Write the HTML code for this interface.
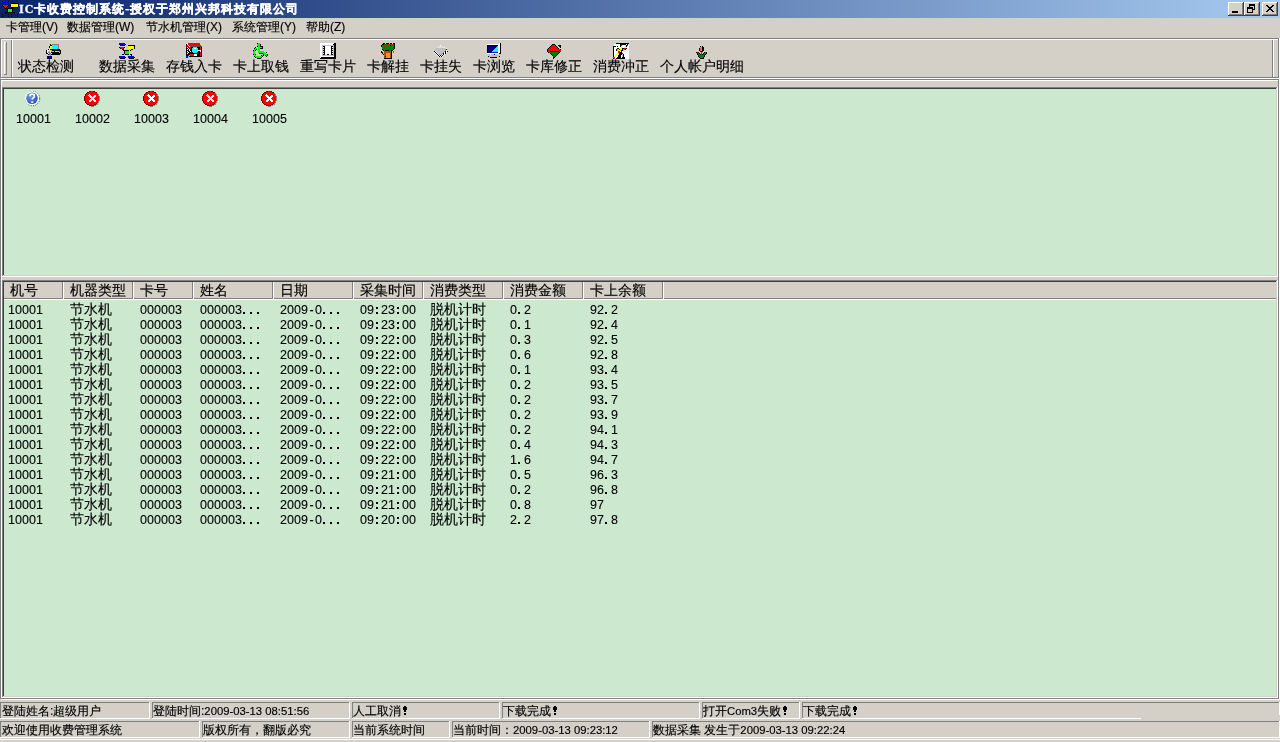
<!DOCTYPE html><html><head><meta charset="utf-8"><style>
*{margin:0;padding:0}
html,body{width:1280px;height:742px;overflow:hidden}
body{background:#D4D0C8;}
#root{position:absolute;left:0;top:0;width:1280px;height:742px;overflow:hidden;will-change:transform;background:#D4D0C8;font-family:"Liberation Sans",sans-serif;color:#000}
.r{position:absolute}
.ic{position:absolute;display:block}
.t{position:absolute;white-space:nowrap;-webkit-text-stroke:0.15px #000}
#title{position:absolute;left:0;top:0;width:1280px;height:18px;background:linear-gradient(to right,#0A246A,#A6CAF0)}
.ttl{-webkit-text-stroke:0.3px #fff;color:#fff;font-weight:bold;font-size:12px;line-height:16px;letter-spacing:1px}
.cb{position:absolute;width:16px;height:14px;background:#D4D0C8;box-shadow:inset -1px -1px 0 #404040, inset 1px 1px 0 #fff, inset -2px -2px 0 #808080}
.m{font-size:12px;line-height:14px}
.tb{font-size:14px;line-height:16px}
.h{font-size:14px;line-height:16px}
.d{font-size:12.5px;line-height:15px;margin-top:3px;-webkit-text-stroke:0.1px #000}
.d i{font-style:normal;display:inline-block;width:7px;text-align:center}
.d i.p,.d i.c{position:relative;height:15px;vertical-align:top}
.d i.p:after{content:'';position:absolute;left:1px;top:9px;width:2px;height:2px;background:#000}
.d i.c:before{content:'';position:absolute;left:2px;top:4px;width:2px;height:2px;background:#000}
.d i.c:after{content:'';position:absolute;left:2px;top:9px;width:2px;height:2px;background:#000}
.dc{font-size:14px;line-height:15px;margin-top:2px}
.s{font-size:12px;line-height:14px}
.s b{font-weight:bold}
.sf{font-family:"Liberation Serif",serif;font-size:12px}
.s .a{font-size:11.3px}
.ex{display:inline-block;vertical-align:top}
</style></head><body><div id="root"><div id="title"></div><svg class="ic" style="left:2px;top:1px" width="16" height="16" shape-rendering="crispEdges"><rect x="0" y="0" width="1" height="1" fill="#000000"/><rect x="6" y="0" width="1" height="1" fill="#000000"/><rect x="0" y="1" width="7" height="1" fill="#0000ff"/><rect x="0" y="2" width="1" height="1" fill="#000000"/><rect x="6" y="2" width="1" height="1" fill="#000000"/><rect x="9" y="2" width="7" height="1" fill="#000000"/><rect x="3" y="3" width="1" height="1" fill="#000000"/><rect x="9" y="3" width="7" height="1" fill="#ffff00"/><rect x="0" y="4" width="1" height="1" fill="#000000"/><rect x="1" y="4" width="5" height="1" fill="#ff0000"/><rect x="6" y="4" width="3" height="1" fill="#000000"/><rect x="9" y="4" width="7" height="1" fill="#ffff00"/><rect x="1" y="5" width="1" height="1" fill="#000000"/><rect x="2" y="5" width="3" height="1" fill="#ff0000"/><rect x="5" y="5" width="1" height="1" fill="#000000"/><rect x="9" y="5" width="7" height="1" fill="#ffff00"/><rect x="2" y="6" width="1" height="1" fill="#000000"/><rect x="3" y="6" width="1" height="1" fill="#ff0000"/><rect x="4" y="6" width="1" height="1" fill="#000000"/><rect x="9" y="6" width="7" height="1" fill="#000000"/><rect x="3" y="7" width="2" height="1" fill="#000000"/><rect x="6" y="7" width="6" height="1" fill="#000000"/><rect x="5" y="8" width="1" height="1" fill="#000000"/><rect x="6" y="8" width="4" height="1" fill="#00ff00"/><rect x="10" y="8" width="1" height="1" fill="#000000"/><rect x="5" y="9" width="1" height="1" fill="#000000"/><rect x="6" y="9" width="4" height="1" fill="#00ff00"/><rect x="10" y="9" width="1" height="1" fill="#000000"/><rect x="5" y="10" width="1" height="1" fill="#000000"/><rect x="6" y="10" width="4" height="1" fill="#00ff00"/><rect x="10" y="10" width="1" height="1" fill="#000000"/><rect x="3" y="11" width="10" height="1" fill="#000000"/><rect x="3" y="12" width="1" height="1" fill="#000000"/><rect x="12" y="12" width="1" height="1" fill="#000000"/><rect x="0" y="13" width="1" height="1" fill="#000000"/><rect x="6" y="13" width="1" height="1" fill="#000000"/><rect x="9" y="13" width="1" height="1" fill="#000000"/><rect x="15" y="13" width="1" height="1" fill="#000000"/><rect x="0" y="14" width="7" height="1" fill="#0000ff"/><rect x="9" y="14" width="7" height="1" fill="#0000ff"/><rect x="0" y="15" width="1" height="1" fill="#000000"/><rect x="6" y="15" width="1" height="1" fill="#000000"/><rect x="9" y="15" width="1" height="1" fill="#000000"/><rect x="15" y="15" width="1" height="1" fill="#000000"/></svg><div class="t ttl" style="left:19px;top:1px"><span class="sf">IC</span>卡收费控制系统<span class="sf">-</span>授权于郑州兴邦科技有限公司</div><div class="cb" style="left:1228px;top:2px"><div class="r" style="left:4px;top:9px;width:6px;height:2px;background:#000"></div></div><div class="cb" style="left:1244px;top:2px"><div class="r" style="left:5px;top:2px;width:6px;height:6px;border:1px solid #000;border-top-width:2px;box-sizing:border-box"></div><div class="r" style="left:3px;top:5px;width:6px;height:6px;border:1px solid #000;border-top-width:2px;box-sizing:border-box;background:#D4D0C8"></div></div><div class="cb" style="left:1262px;top:2px"><svg class="ic" style="left:4px;top:3px" width="8" height="7" shape-rendering="crispEdges"><rect x="0" y="0" width="2" height="1" fill="#000000"/><rect x="6" y="0" width="2" height="1" fill="#000000"/><rect x="1" y="1" width="2" height="1" fill="#000000"/><rect x="5" y="1" width="2" height="1" fill="#000000"/><rect x="2" y="2" width="4" height="1" fill="#000000"/><rect x="3" y="3" width="2" height="1" fill="#000000"/><rect x="2" y="4" width="4" height="1" fill="#000000"/><rect x="1" y="5" width="2" height="1" fill="#000000"/><rect x="5" y="5" width="2" height="1" fill="#000000"/><rect x="0" y="6" width="2" height="1" fill="#000000"/><rect x="6" y="6" width="2" height="1" fill="#000000"/></svg></div><div class="t m" style="left:6px;top:20px">卡管理(V)</div><div class="t m" style="left:67px;top:20px">数据管理(W)</div><div class="t m" style="left:146px;top:20px">节水机管理(X)</div><div class="t m" style="left:232px;top:20px">系统管理(Y)</div><div class="t m" style="left:306px;top:20px">帮助(Z)</div><div class="r" style="left:0px;top:38px;width:1279px;height:1px;background:#808080"></div><div class="r" style="left:0px;top:38px;width:1px;height:40px;background:#808080"></div><div class="r" style="left:0px;top:77px;width:1279px;height:1px;background:#808080"></div><div class="r" style="left:1278px;top:38px;width:1px;height:40px;background:#808080"></div><div class="r" style="left:1px;top:39px;width:1277px;height:1px;background:#ffffff"></div><div class="r" style="left:1px;top:39px;width:1px;height:38px;background:#ffffff"></div><div class="r" style="left:1px;top:78px;width:1279px;height:1px;background:#ffffff"></div><div class="r" style="left:1279px;top:38px;width:1px;height:41px;background:#ffffff"></div><div class="r" style="left:4px;top:42px;width:2px;height:1px;background:#ffffff"></div><div class="r" style="left:4px;top:42px;width:1px;height:32px;background:#ffffff"></div><div class="r" style="left:6px;top:42px;width:1px;height:33px;background:#808080"></div><div class="r" style="left:4px;top:74px;width:3px;height:1px;background:#808080"></div><div class="r" style="left:11px;top:40px;width:1px;height:37px;background:#808080"></div><div class="r" style="left:12px;top:40px;width:1px;height:37px;background:#ffffff"></div><div class="r" style="left:1272px;top:40px;width:1px;height:37px;background:#808080"></div><div class="r" style="left:1273px;top:40px;width:1px;height:37px;background:#ffffff"></div><div class="t tb" style="left:18px;top:58px">状态检测</div><div class="t tb" style="left:99px;top:58px">数据采集</div><div class="t tb" style="left:166px;top:58px">存钱入卡</div><div class="t tb" style="left:233px;top:58px">卡上取钱</div><div class="t tb" style="left:300px;top:58px">重写卡片</div><div class="t tb" style="left:367px;top:58px">卡解挂</div><div class="t tb" style="left:420px;top:58px">卡挂失</div><div class="t tb" style="left:473px;top:58px">卡浏览</div><div class="t tb" style="left:526px;top:58px">卡库修正</div><div class="t tb" style="left:593px;top:58px">消费冲正</div><div class="t tb" style="left:660px;top:58px">个人帐户明细</div><svg class="ic" style="left:45px;top:44px" width="17" height="15" shape-rendering="crispEdges"><rect x="5" y="0" width="1" height="1" fill="#000000"/><rect x="7" y="0" width="7" height="1" fill="#808080"/><rect x="5" y="1" width="2" height="1" fill="#000000"/><rect x="7" y="1" width="6" height="1" fill="#00ffff"/><rect x="13" y="1" width="1" height="1" fill="#808080"/><rect x="4" y="2" width="1" height="1" fill="#000000"/><rect x="5" y="2" width="2" height="1" fill="#ffff00"/><rect x="7" y="2" width="6" height="1" fill="#00ffff"/><rect x="13" y="2" width="1" height="1" fill="#808080"/><rect x="4" y="3" width="1" height="1" fill="#000000"/><rect x="5" y="3" width="2" height="1" fill="#ffff00"/><rect x="7" y="3" width="6" height="1" fill="#00ffff"/><rect x="13" y="3" width="1" height="1" fill="#808080"/><rect x="5" y="4" width="2" height="1" fill="#ffff00"/><rect x="7" y="4" width="6" height="1" fill="#00ffff"/><rect x="13" y="4" width="1" height="1" fill="#808080"/><rect x="3" y="5" width="1" height="1" fill="#000000"/><rect x="4" y="5" width="1" height="1" fill="#ffffff"/><rect x="5" y="5" width="2" height="1" fill="#000080"/><rect x="7" y="5" width="8" height="1" fill="#000000"/><rect x="1" y="6" width="1" height="1" fill="#000000"/><rect x="2" y="6" width="2" height="1" fill="#ffffff"/><rect x="4" y="6" width="3" height="1" fill="#c0c0c0"/><rect x="7" y="6" width="9" height="1" fill="#000000"/><rect x="1" y="7" width="1" height="1" fill="#000000"/><rect x="2" y="7" width="1" height="1" fill="#ffffff"/><rect x="3" y="7" width="2" height="1" fill="#c0c0c0"/><rect x="5" y="7" width="1" height="1" fill="#ffffff"/><rect x="6" y="7" width="1" height="1" fill="#808080"/><rect x="7" y="7" width="2" height="1" fill="#c0c0c0"/><rect x="9" y="7" width="1" height="1" fill="#000000"/><rect x="10" y="7" width="1" height="1" fill="#ffff00"/><rect x="11" y="7" width="3" height="1" fill="#c0c0c0"/><rect x="14" y="7" width="1" height="1" fill="#808080"/><rect x="15" y="7" width="1" height="1" fill="#000000"/><rect x="1" y="8" width="1" height="1" fill="#000000"/><rect x="2" y="8" width="1" height="1" fill="#ffffff"/><rect x="3" y="8" width="2" height="1" fill="#808080"/><rect x="5" y="8" width="1" height="1" fill="#c0c0c0"/><rect x="6" y="8" width="8" height="1" fill="#000000"/><rect x="14" y="8" width="1" height="1" fill="#c0c0c0"/><rect x="15" y="8" width="1" height="1" fill="#000000"/><rect x="1" y="9" width="2" height="1" fill="#000000"/><rect x="3" y="9" width="1" height="1" fill="#ffffff"/><rect x="4" y="9" width="2" height="1" fill="#808080"/><rect x="6" y="9" width="1" height="1" fill="#ffffff"/><rect x="7" y="9" width="9" height="1" fill="#000000"/><rect x="3" y="10" width="1" height="1" fill="#000000"/><rect x="4" y="10" width="2" height="1" fill="#808080"/><rect x="6" y="10" width="9" height="1" fill="#000000"/><rect x="5" y="11" width="1" height="1" fill="#808080"/><rect x="2" y="12" width="5" height="1" fill="#000080"/><rect x="2" y="13" width="1" height="1" fill="#000080"/><rect x="3" y="13" width="1" height="1" fill="#000000"/><rect x="4" y="13" width="3" height="1" fill="#000080"/><rect x="2" y="14" width="3" height="1" fill="#000080"/><rect x="5" y="14" width="1" height="1" fill="#000000"/><rect x="6" y="14" width="1" height="1" fill="#000080"/></svg><svg class="ic" style="left:118px;top:43px" width="18" height="16" shape-rendering="crispEdges"><rect x="1" y="0" width="6" height="1" fill="#0000ff"/><rect x="1" y="1" width="6" height="1" fill="#0000ff"/><rect x="7" y="1" width="1" height="1" fill="#000000"/><rect x="2" y="2" width="5" height="1" fill="#000000"/><rect x="10" y="2" width="7" height="1" fill="#000000"/><rect x="10" y="3" width="6" height="1" fill="#ffff00"/><rect x="16" y="3" width="1" height="1" fill="#000000"/><rect x="1" y="4" width="1" height="1" fill="#000000"/><rect x="2" y="4" width="4" height="1" fill="#ff0000"/><rect x="6" y="4" width="1" height="1" fill="#000000"/><rect x="10" y="4" width="6" height="1" fill="#ffff00"/><rect x="16" y="4" width="1" height="1" fill="#000000"/><rect x="2" y="5" width="1" height="1" fill="#000000"/><rect x="3" y="5" width="2" height="1" fill="#ff0000"/><rect x="5" y="5" width="1" height="1" fill="#000000"/><rect x="10" y="5" width="6" height="1" fill="#ffff00"/><rect x="16" y="5" width="1" height="1" fill="#000000"/><rect x="4" y="6" width="2" height="1" fill="#000000"/><rect x="13" y="6" width="2" height="1" fill="#000000"/><rect x="5" y="7" width="6" height="1" fill="#000000"/><rect x="12" y="7" width="1" height="1" fill="#000000"/><rect x="6" y="8" width="1" height="1" fill="#000000"/><rect x="7" y="8" width="4" height="1" fill="#00ff00"/><rect x="6" y="9" width="1" height="1" fill="#000000"/><rect x="7" y="9" width="4" height="1" fill="#00ff00"/><rect x="6" y="10" width="1" height="1" fill="#000000"/><rect x="7" y="10" width="4" height="1" fill="#00ff00"/><rect x="4" y="11" width="2" height="1" fill="#000000"/><rect x="7" y="11" width="4" height="1" fill="#000000"/><rect x="12" y="11" width="2" height="1" fill="#000000"/><rect x="13" y="12" width="1" height="1" fill="#000000"/><rect x="1" y="13" width="6" height="1" fill="#0000ff"/><rect x="10" y="13" width="6" height="1" fill="#0000ff"/><rect x="1" y="14" width="6" height="1" fill="#0000ff"/><rect x="7" y="14" width="1" height="1" fill="#000000"/><rect x="10" y="14" width="6" height="1" fill="#0000ff"/><rect x="16" y="14" width="1" height="1" fill="#000000"/><rect x="2" y="15" width="5" height="1" fill="#000000"/><rect x="11" y="15" width="5" height="1" fill="#000000"/></svg><svg class="ic" style="left:186px;top:43px" width="16" height="15" shape-rendering="crispEdges"><rect x="2" y="0" width="12" height="1" fill="#505050"/><rect x="0" y="1" width="1" height="1" fill="#000000"/><rect x="1" y="1" width="1" height="1" fill="#ffffff"/><rect x="2" y="1" width="12" height="1" fill="#ff0000"/><rect x="0" y="2" width="1" height="1" fill="#000000"/><rect x="1" y="2" width="1" height="1" fill="#ff0000"/><rect x="2" y="2" width="1" height="1" fill="#ffffff"/><rect x="3" y="2" width="12" height="1" fill="#ff0000"/><rect x="0" y="3" width="1" height="1" fill="#ff0000"/><rect x="1" y="3" width="1" height="1" fill="#000000"/><rect x="2" y="3" width="1" height="1" fill="#ff0000"/><rect x="3" y="3" width="1" height="1" fill="#ffffff"/><rect x="4" y="3" width="12" height="1" fill="#505050"/><rect x="0" y="4" width="1" height="1" fill="#000000"/><rect x="1" y="4" width="1" height="1" fill="#ffffff"/><rect x="2" y="4" width="1" height="1" fill="#000000"/><rect x="3" y="4" width="2" height="1" fill="#ff0000"/><rect x="5" y="4" width="2" height="1" fill="#000000"/><rect x="7" y="4" width="4" height="1" fill="#00ffff"/><rect x="11" y="4" width="3" height="1" fill="#000000"/><rect x="14" y="4" width="1" height="1" fill="#ff0000"/><rect x="15" y="4" width="1" height="1" fill="#000000"/><rect x="0" y="5" width="2" height="1" fill="#000000"/><rect x="2" y="5" width="1" height="1" fill="#ffffff"/><rect x="3" y="5" width="1" height="1" fill="#000000"/><rect x="4" y="5" width="1" height="1" fill="#ff0000"/><rect x="5" y="5" width="1" height="1" fill="#000000"/><rect x="6" y="5" width="2" height="1" fill="#00ffff"/><rect x="8" y="5" width="2" height="1" fill="#ffffff"/><rect x="10" y="5" width="2" height="1" fill="#00ffff"/><rect x="12" y="5" width="2" height="1" fill="#000000"/><rect x="14" y="5" width="1" height="1" fill="#ff0000"/><rect x="15" y="5" width="1" height="1" fill="#000000"/><rect x="0" y="6" width="1" height="1" fill="#000000"/><rect x="1" y="6" width="1" height="1" fill="#ffffff"/><rect x="2" y="6" width="1" height="1" fill="#000000"/><rect x="3" y="6" width="1" height="1" fill="#ffffff"/><rect x="4" y="6" width="2" height="1" fill="#000000"/><rect x="6" y="6" width="6" height="1" fill="#00ffff"/><rect x="12" y="6" width="2" height="1" fill="#000000"/><rect x="14" y="6" width="1" height="1" fill="#ff0000"/><rect x="15" y="6" width="1" height="1" fill="#000000"/><rect x="0" y="7" width="3" height="1" fill="#000000"/><rect x="3" y="7" width="1" height="1" fill="#ffffff"/><rect x="4" y="7" width="2" height="1" fill="#000000"/><rect x="6" y="7" width="6" height="1" fill="#00ffff"/><rect x="12" y="7" width="3" height="1" fill="#ffffff"/><rect x="15" y="7" width="1" height="1" fill="#000000"/><rect x="0" y="8" width="1" height="1" fill="#000000"/><rect x="1" y="8" width="1" height="1" fill="#ffffff"/><rect x="2" y="8" width="2" height="1" fill="#000000"/><rect x="4" y="8" width="1" height="1" fill="#ffffff"/><rect x="5" y="8" width="1" height="1" fill="#000000"/><rect x="6" y="8" width="6" height="1" fill="#00ffff"/><rect x="12" y="8" width="2" height="1" fill="#000000"/><rect x="14" y="8" width="1" height="1" fill="#ffff00"/><rect x="15" y="8" width="1" height="1" fill="#000000"/><rect x="0" y="9" width="1" height="1" fill="#000000"/><rect x="1" y="9" width="1" height="1" fill="#ff0000"/><rect x="2" y="9" width="1" height="1" fill="#ffffff"/><rect x="3" y="9" width="2" height="1" fill="#000000"/><rect x="5" y="9" width="1" height="1" fill="#0000ff"/><rect x="6" y="9" width="1" height="1" fill="#000000"/><rect x="7" y="9" width="4" height="1" fill="#00ffff"/><rect x="11" y="9" width="3" height="1" fill="#000000"/><rect x="14" y="9" width="1" height="1" fill="#ff0000"/><rect x="15" y="9" width="1" height="1" fill="#000000"/><rect x="0" y="10" width="1" height="1" fill="#000000"/><rect x="1" y="10" width="1" height="1" fill="#ffffff"/><rect x="2" y="10" width="2" height="1" fill="#000000"/><rect x="4" y="10" width="1" height="1" fill="#0000ff"/><rect x="5" y="10" width="9" height="1" fill="#000000"/><rect x="14" y="10" width="1" height="1" fill="#ff0000"/><rect x="15" y="10" width="1" height="1" fill="#000000"/><rect x="0" y="11" width="3" height="1" fill="#000000"/><rect x="3" y="11" width="1" height="1" fill="#0000ff"/><rect x="4" y="11" width="4" height="1" fill="#ff0000"/><rect x="8" y="11" width="3" height="1" fill="#ffffff"/><rect x="11" y="11" width="3" height="1" fill="#000000"/><rect x="14" y="11" width="1" height="1" fill="#ff0000"/><rect x="15" y="11" width="1" height="1" fill="#000000"/><rect x="0" y="12" width="2" height="1" fill="#000000"/><rect x="2" y="12" width="1" height="1" fill="#0000ff"/><rect x="3" y="12" width="1" height="1" fill="#00ffff"/><rect x="4" y="12" width="4" height="1" fill="#ff0000"/><rect x="8" y="12" width="3" height="1" fill="#ffffff"/><rect x="11" y="12" width="3" height="1" fill="#000000"/><rect x="14" y="12" width="1" height="1" fill="#ff0000"/><rect x="15" y="12" width="1" height="1" fill="#000000"/><rect x="0" y="13" width="2" height="1" fill="#0000ff"/><rect x="2" y="13" width="1" height="1" fill="#00ffff"/><rect x="3" y="13" width="13" height="1" fill="#000000"/><rect x="0" y="14" width="2" height="1" fill="#0000ff"/></svg><svg class="ic" style="left:253px;top:43px" width="15" height="16" shape-rendering="crispEdges"><rect x="4" y="0" width="1" height="1" fill="#000000"/><rect x="5" y="0" width="2" height="1" fill="#00ff00"/><rect x="4" y="1" width="3" height="1" fill="#00ff00"/><rect x="7" y="1" width="1" height="1" fill="#000000"/><rect x="4" y="2" width="3" height="1" fill="#00ff00"/><rect x="7" y="2" width="1" height="1" fill="#000000"/><rect x="4" y="3" width="1" height="1" fill="#000000"/><rect x="5" y="3" width="2" height="1" fill="#00ff00"/><rect x="7" y="3" width="3" height="1" fill="#000000"/><rect x="2" y="4" width="1" height="1" fill="#000000"/><rect x="5" y="4" width="4" height="1" fill="#00ff00"/><rect x="9" y="4" width="1" height="1" fill="#000000"/><rect x="1" y="5" width="1" height="1" fill="#000000"/><rect x="2" y="5" width="2" height="1" fill="#00ff00"/><rect x="5" y="5" width="2" height="1" fill="#00ff00"/><rect x="7" y="5" width="3" height="1" fill="#000000"/><rect x="1" y="6" width="2" height="1" fill="#00ff00"/><rect x="3" y="6" width="1" height="1" fill="#000000"/><rect x="5" y="6" width="2" height="1" fill="#00ff00"/><rect x="0" y="7" width="1" height="1" fill="#000000"/><rect x="1" y="7" width="1" height="1" fill="#00ff00"/><rect x="2" y="7" width="1" height="1" fill="#000000"/><rect x="5" y="7" width="2" height="1" fill="#00ff00"/><rect x="0" y="8" width="2" height="1" fill="#00ff00"/><rect x="5" y="8" width="6" height="1" fill="#00ff00"/><rect x="0" y="9" width="2" height="1" fill="#00ff00"/><rect x="5" y="9" width="7" height="1" fill="#00ff00"/><rect x="13" y="9" width="1" height="1" fill="#000000"/><rect x="0" y="10" width="2" height="1" fill="#00ff00"/><rect x="6" y="10" width="4" height="1" fill="#000000"/><rect x="10" y="10" width="3" height="1" fill="#00ff00"/><rect x="0" y="11" width="1" height="1" fill="#000000"/><rect x="1" y="11" width="1" height="1" fill="#00ff00"/><rect x="2" y="11" width="1" height="1" fill="#000000"/><rect x="10" y="11" width="1" height="1" fill="#000000"/><rect x="11" y="11" width="3" height="1" fill="#00ff00"/><rect x="14" y="11" width="1" height="1" fill="#000000"/><rect x="1" y="12" width="2" height="1" fill="#00ff00"/><rect x="8" y="12" width="1" height="1" fill="#000000"/><rect x="9" y="12" width="1" height="1" fill="#00ff00"/><rect x="10" y="12" width="1" height="1" fill="#000000"/><rect x="12" y="12" width="1" height="1" fill="#000000"/><rect x="13" y="12" width="1" height="1" fill="#00ff00"/><rect x="14" y="12" width="1" height="1" fill="#000000"/><rect x="1" y="13" width="1" height="1" fill="#000000"/><rect x="2" y="13" width="7" height="1" fill="#00ff00"/><rect x="9" y="13" width="1" height="1" fill="#000000"/><rect x="13" y="13" width="1" height="1" fill="#000000"/><rect x="2" y="14" width="1" height="1" fill="#000000"/><rect x="3" y="14" width="5" height="1" fill="#00ff00"/><rect x="8" y="14" width="1" height="1" fill="#000000"/><rect x="4" y="15" width="4" height="1" fill="#000000"/></svg><svg class="ic" style="left:320px;top:43px" width="16" height="16" shape-rendering="crispEdges"><rect x="0" y="0" width="14" height="1" fill="#ffffff"/><rect x="14" y="0" width="2" height="1" fill="#000000"/><rect x="0" y="1" width="13" height="1" fill="#ffffff"/><rect x="13" y="1" width="3" height="1" fill="#000000"/><rect x="0" y="2" width="2" height="1" fill="#ffffff"/><rect x="2" y="2" width="12" height="1" fill="#c0c0c0"/><rect x="14" y="2" width="2" height="1" fill="#000000"/><rect x="0" y="3" width="2" height="1" fill="#ffffff"/><rect x="2" y="3" width="1" height="1" fill="#c0c0c0"/><rect x="3" y="3" width="2" height="1" fill="#000000"/><rect x="5" y="3" width="6" height="1" fill="#ffffff"/><rect x="11" y="3" width="2" height="1" fill="#000000"/><rect x="13" y="3" width="1" height="1" fill="#c0c0c0"/><rect x="14" y="3" width="2" height="1" fill="#000000"/><rect x="0" y="4" width="2" height="1" fill="#ffffff"/><rect x="2" y="4" width="1" height="1" fill="#c0c0c0"/><rect x="3" y="4" width="1" height="1" fill="#ffffff"/><rect x="4" y="4" width="1" height="1" fill="#000000"/><rect x="5" y="4" width="6" height="1" fill="#ffffff"/><rect x="11" y="4" width="1" height="1" fill="#000000"/><rect x="12" y="4" width="1" height="1" fill="#ffffff"/><rect x="13" y="4" width="1" height="1" fill="#c0c0c0"/><rect x="14" y="4" width="2" height="1" fill="#000000"/><rect x="0" y="5" width="2" height="1" fill="#ffffff"/><rect x="2" y="5" width="1" height="1" fill="#c0c0c0"/><rect x="3" y="5" width="2" height="1" fill="#000000"/><rect x="5" y="5" width="6" height="1" fill="#ffffff"/><rect x="11" y="5" width="2" height="1" fill="#000000"/><rect x="13" y="5" width="1" height="1" fill="#c0c0c0"/><rect x="14" y="5" width="2" height="1" fill="#000000"/><rect x="0" y="6" width="2" height="1" fill="#ffffff"/><rect x="2" y="6" width="1" height="1" fill="#c0c0c0"/><rect x="3" y="6" width="1" height="1" fill="#ffffff"/><rect x="4" y="6" width="1" height="1" fill="#000000"/><rect x="5" y="6" width="6" height="1" fill="#ffffff"/><rect x="11" y="6" width="1" height="1" fill="#000000"/><rect x="12" y="6" width="1" height="1" fill="#ffffff"/><rect x="13" y="6" width="1" height="1" fill="#c0c0c0"/><rect x="14" y="6" width="2" height="1" fill="#000000"/><rect x="0" y="7" width="2" height="1" fill="#ffffff"/><rect x="2" y="7" width="1" height="1" fill="#c0c0c0"/><rect x="3" y="7" width="2" height="1" fill="#000000"/><rect x="5" y="7" width="6" height="1" fill="#ffffff"/><rect x="11" y="7" width="2" height="1" fill="#000000"/><rect x="13" y="7" width="1" height="1" fill="#c0c0c0"/><rect x="14" y="7" width="2" height="1" fill="#000000"/><rect x="0" y="8" width="2" height="1" fill="#ffffff"/><rect x="2" y="8" width="1" height="1" fill="#c0c0c0"/><rect x="3" y="8" width="1" height="1" fill="#ffffff"/><rect x="4" y="8" width="1" height="1" fill="#000000"/><rect x="5" y="8" width="6" height="1" fill="#ffffff"/><rect x="11" y="8" width="1" height="1" fill="#000000"/><rect x="12" y="8" width="1" height="1" fill="#ffffff"/><rect x="13" y="8" width="1" height="1" fill="#c0c0c0"/><rect x="14" y="8" width="2" height="1" fill="#000000"/><rect x="0" y="9" width="2" height="1" fill="#ffffff"/><rect x="2" y="9" width="1" height="1" fill="#c0c0c0"/><rect x="3" y="9" width="2" height="1" fill="#000000"/><rect x="5" y="9" width="6" height="1" fill="#ffffff"/><rect x="11" y="9" width="2" height="1" fill="#000000"/><rect x="13" y="9" width="1" height="1" fill="#c0c0c0"/><rect x="14" y="9" width="2" height="1" fill="#000000"/><rect x="0" y="10" width="2" height="1" fill="#ffffff"/><rect x="2" y="10" width="1" height="1" fill="#c0c0c0"/><rect x="3" y="10" width="1" height="1" fill="#ffffff"/><rect x="4" y="10" width="1" height="1" fill="#000000"/><rect x="5" y="10" width="6" height="1" fill="#ffffff"/><rect x="11" y="10" width="1" height="1" fill="#000000"/><rect x="12" y="10" width="1" height="1" fill="#ffffff"/><rect x="13" y="10" width="1" height="1" fill="#c0c0c0"/><rect x="14" y="10" width="2" height="1" fill="#000000"/><rect x="0" y="11" width="2" height="1" fill="#ffffff"/><rect x="2" y="11" width="1" height="1" fill="#c0c0c0"/><rect x="3" y="11" width="2" height="1" fill="#000000"/><rect x="5" y="11" width="2" height="1" fill="#ffffff"/><rect x="7" y="11" width="2" height="1" fill="#000000"/><rect x="9" y="11" width="2" height="1" fill="#ffffff"/><rect x="11" y="11" width="2" height="1" fill="#000000"/><rect x="13" y="11" width="1" height="1" fill="#c0c0c0"/><rect x="14" y="11" width="2" height="1" fill="#000000"/><rect x="0" y="12" width="2" height="1" fill="#ffffff"/><rect x="2" y="12" width="12" height="1" fill="#c0c0c0"/><rect x="14" y="12" width="2" height="1" fill="#000000"/><rect x="0" y="13" width="14" height="1" fill="#ffffff"/><rect x="14" y="13" width="2" height="1" fill="#000000"/><rect x="0" y="14" width="1" height="1" fill="#ffffff"/><rect x="1" y="14" width="15" height="1" fill="#000000"/><rect x="0" y="15" width="16" height="1" fill="#000000"/></svg><svg class="ic" style="left:380px;top:43px" width="15" height="16" shape-rendering="crispEdges"><rect x="3" y="0" width="2" height="1" fill="#000000"/><rect x="6" y="0" width="3" height="1" fill="#000000"/><rect x="10" y="0" width="2" height="1" fill="#000000"/><rect x="13" y="0" width="2" height="1" fill="#000000"/><rect x="2" y="1" width="2" height="1" fill="#000000"/><rect x="4" y="1" width="4" height="1" fill="#008000"/><rect x="8" y="1" width="1" height="1" fill="#ff0000"/><rect x="9" y="1" width="3" height="1" fill="#008000"/><rect x="12" y="1" width="1" height="1" fill="#ff0000"/><rect x="13" y="1" width="1" height="1" fill="#008000"/><rect x="14" y="1" width="1" height="1" fill="#000000"/><rect x="1" y="2" width="1" height="1" fill="#000000"/><rect x="2" y="2" width="1" height="1" fill="#ff0000"/><rect x="3" y="2" width="7" height="1" fill="#008000"/><rect x="10" y="2" width="1" height="1" fill="#000000"/><rect x="11" y="2" width="3" height="1" fill="#008000"/><rect x="14" y="2" width="1" height="1" fill="#000000"/><rect x="1" y="3" width="1" height="1" fill="#000000"/><rect x="2" y="3" width="2" height="1" fill="#008000"/><rect x="4" y="3" width="1" height="1" fill="#ff0000"/><rect x="5" y="3" width="9" height="1" fill="#008000"/><rect x="14" y="3" width="1" height="1" fill="#000000"/><rect x="2" y="4" width="12" height="1" fill="#008000"/><rect x="14" y="4" width="1" height="1" fill="#000000"/><rect x="2" y="5" width="5" height="1" fill="#008000"/><rect x="7" y="5" width="1" height="1" fill="#ff0000"/><rect x="8" y="5" width="3" height="1" fill="#008000"/><rect x="11" y="5" width="1" height="1" fill="#ff0000"/><rect x="12" y="5" width="2" height="1" fill="#008000"/><rect x="14" y="5" width="1" height="1" fill="#000000"/><rect x="2" y="6" width="1" height="1" fill="#000000"/><rect x="3" y="6" width="1" height="1" fill="#ff0000"/><rect x="4" y="6" width="9" height="1" fill="#008000"/><rect x="13" y="6" width="1" height="1" fill="#000000"/><rect x="3" y="7" width="1" height="1" fill="#000000"/><rect x="4" y="7" width="1" height="1" fill="#008000"/><rect x="5" y="7" width="4" height="1" fill="#000000"/><rect x="9" y="7" width="2" height="1" fill="#008000"/><rect x="11" y="7" width="2" height="1" fill="#000000"/><rect x="1" y="8" width="1" height="1" fill="#000000"/><rect x="4" y="8" width="7" height="1" fill="#b05010"/><rect x="11" y="8" width="1" height="1" fill="#000000"/><rect x="13" y="8" width="1" height="1" fill="#b05010"/><rect x="1" y="9" width="2" height="1" fill="#000000"/><rect x="4" y="9" width="7" height="1" fill="#b05010"/><rect x="11" y="9" width="1" height="1" fill="#000000"/><rect x="13" y="9" width="1" height="1" fill="#b05010"/><rect x="2" y="10" width="1" height="1" fill="#000000"/><rect x="4" y="10" width="2" height="1" fill="#b05010"/><rect x="6" y="10" width="4" height="1" fill="#ff9020"/><rect x="10" y="10" width="1" height="1" fill="#b05010"/><rect x="11" y="10" width="1" height="1" fill="#000000"/><rect x="3" y="11" width="1" height="1" fill="#000000"/><rect x="4" y="11" width="2" height="1" fill="#b05010"/><rect x="6" y="11" width="4" height="1" fill="#ff9020"/><rect x="10" y="11" width="1" height="1" fill="#b05010"/><rect x="11" y="11" width="1" height="1" fill="#000000"/><rect x="4" y="12" width="2" height="1" fill="#b05010"/><rect x="6" y="12" width="4" height="1" fill="#ff9020"/><rect x="10" y="12" width="1" height="1" fill="#b05010"/><rect x="11" y="12" width="1" height="1" fill="#000000"/><rect x="4" y="13" width="1" height="1" fill="#b05010"/><rect x="5" y="13" width="1" height="1" fill="#000000"/><rect x="6" y="13" width="4" height="1" fill="#ff9020"/><rect x="10" y="13" width="1" height="1" fill="#b05010"/><rect x="11" y="13" width="1" height="1" fill="#000000"/><rect x="4" y="14" width="2" height="1" fill="#b05010"/><rect x="6" y="14" width="4" height="1" fill="#ff9020"/><rect x="10" y="14" width="1" height="1" fill="#b05010"/><rect x="11" y="14" width="1" height="1" fill="#000000"/><rect x="4" y="15" width="8" height="1" fill="#000000"/></svg><svg class="ic" style="left:434px;top:45px" width="14" height="12" shape-rendering="crispEdges"><rect x="6" y="0" width="1" height="1" fill="#ffffff"/><rect x="4" y="1" width="5" height="1" fill="#e0e0e0"/><rect x="3" y="2" width="7" height="1" fill="#e0e0e0"/><rect x="10" y="2" width="1" height="1" fill="#ffffff"/><rect x="2" y="3" width="10" height="1" fill="#c0c0c0"/><rect x="12" y="3" width="1" height="1" fill="#ffffff"/><rect x="1" y="4" width="11" height="1" fill="#c0c0c0"/><rect x="12" y="4" width="1" height="1" fill="#000000"/><rect x="1" y="5" width="10" height="1" fill="#c0c0c0"/><rect x="11" y="5" width="1" height="1" fill="#8080ff"/><rect x="12" y="5" width="1" height="1" fill="#ffffff"/><rect x="0" y="6" width="1" height="1" fill="#000000"/><rect x="1" y="6" width="1" height="1" fill="#ffffff"/><rect x="2" y="6" width="8" height="1" fill="#c0c0c0"/><rect x="10" y="6" width="1" height="1" fill="#8080ff"/><rect x="11" y="6" width="1" height="1" fill="#000000"/><rect x="12" y="6" width="1" height="1" fill="#ffffff"/><rect x="13" y="6" width="1" height="1" fill="#000000"/><rect x="0" y="7" width="1" height="1" fill="#ffffff"/><rect x="1" y="7" width="1" height="1" fill="#000000"/><rect x="2" y="7" width="1" height="1" fill="#ffffff"/><rect x="3" y="7" width="6" height="1" fill="#c0c0c0"/><rect x="9" y="7" width="1" height="1" fill="#8080ff"/><rect x="10" y="7" width="1" height="1" fill="#ffffff"/><rect x="11" y="7" width="1" height="1" fill="#000000"/><rect x="12" y="7" width="1" height="1" fill="#ffffff"/><rect x="1" y="8" width="1" height="1" fill="#ffffff"/><rect x="2" y="8" width="1" height="1" fill="#000000"/><rect x="3" y="8" width="1" height="1" fill="#ffffff"/><rect x="4" y="8" width="4" height="1" fill="#c0c0c0"/><rect x="8" y="8" width="1" height="1" fill="#8080ff"/><rect x="9" y="8" width="1" height="1" fill="#000000"/><rect x="10" y="8" width="1" height="1" fill="#ffffff"/><rect x="11" y="8" width="1" height="1" fill="#000000"/><rect x="2" y="9" width="1" height="1" fill="#ffffff"/><rect x="3" y="9" width="1" height="1" fill="#000000"/><rect x="4" y="9" width="1" height="1" fill="#ffffff"/><rect x="5" y="9" width="1" height="1" fill="#808080"/><rect x="6" y="9" width="1" height="1" fill="#c0c0c0"/><rect x="7" y="9" width="1" height="1" fill="#8080ff"/><rect x="8" y="9" width="1" height="1" fill="#ffffff"/><rect x="9" y="9" width="1" height="1" fill="#000000"/><rect x="10" y="9" width="1" height="1" fill="#ffffff"/><rect x="3" y="10" width="1" height="1" fill="#ffffff"/><rect x="4" y="10" width="1" height="1" fill="#000000"/><rect x="5" y="10" width="1" height="1" fill="#ffffff"/><rect x="6" y="10" width="1" height="1" fill="#000000"/><rect x="7" y="10" width="1" height="1" fill="#ffffff"/><rect x="8" y="10" width="1" height="1" fill="#000000"/><rect x="9" y="10" width="1" height="1" fill="#ffffff"/><rect x="4" y="11" width="1" height="1" fill="#ffffff"/><rect x="5" y="11" width="1" height="1" fill="#000000"/><rect x="6" y="11" width="1" height="1" fill="#ffffff"/><rect x="7" y="11" width="1" height="1" fill="#000000"/><rect x="8" y="11" width="1" height="1" fill="#ffffff"/></svg><svg class="ic" style="left:486px;top:43px" width="16" height="15" shape-rendering="crispEdges"><rect x="13" y="0" width="1" height="1" fill="#ffffff"/><rect x="14" y="0" width="1" height="1" fill="#000000"/><rect x="1" y="1" width="13" height="1" fill="#ffffff"/><rect x="14" y="1" width="1" height="1" fill="#000000"/><rect x="1" y="2" width="11" height="1" fill="#000000"/><rect x="12" y="2" width="2" height="1" fill="#ffffff"/><rect x="14" y="2" width="1" height="1" fill="#000000"/><rect x="1" y="3" width="1" height="1" fill="#000000"/><rect x="2" y="3" width="9" height="1" fill="#000080"/><rect x="11" y="3" width="1" height="1" fill="#00ffff"/><rect x="12" y="3" width="2" height="1" fill="#ffffff"/><rect x="14" y="3" width="1" height="1" fill="#000000"/><rect x="1" y="4" width="1" height="1" fill="#000000"/><rect x="2" y="4" width="8" height="1" fill="#000080"/><rect x="10" y="4" width="2" height="1" fill="#00ffff"/><rect x="12" y="4" width="2" height="1" fill="#ffffff"/><rect x="14" y="4" width="1" height="1" fill="#000000"/><rect x="1" y="5" width="1" height="1" fill="#000000"/><rect x="2" y="5" width="7" height="1" fill="#000080"/><rect x="9" y="5" width="3" height="1" fill="#00ffff"/><rect x="12" y="5" width="2" height="1" fill="#ffffff"/><rect x="14" y="5" width="1" height="1" fill="#000000"/><rect x="1" y="6" width="1" height="1" fill="#000000"/><rect x="2" y="6" width="6" height="1" fill="#000080"/><rect x="8" y="6" width="4" height="1" fill="#00ffff"/><rect x="12" y="6" width="2" height="1" fill="#ffffff"/><rect x="14" y="6" width="1" height="1" fill="#000000"/><rect x="1" y="7" width="1" height="1" fill="#000000"/><rect x="2" y="7" width="5" height="1" fill="#000080"/><rect x="7" y="7" width="5" height="1" fill="#00ffff"/><rect x="12" y="7" width="2" height="1" fill="#ffffff"/><rect x="14" y="7" width="1" height="1" fill="#000000"/><rect x="1" y="8" width="1" height="1" fill="#000000"/><rect x="2" y="8" width="4" height="1" fill="#000080"/><rect x="6" y="8" width="6" height="1" fill="#00ffff"/><rect x="12" y="8" width="2" height="1" fill="#ffffff"/><rect x="14" y="8" width="1" height="1" fill="#000000"/><rect x="1" y="9" width="1" height="1" fill="#000000"/><rect x="2" y="9" width="3" height="1" fill="#000080"/><rect x="5" y="9" width="7" height="1" fill="#0000ff"/><rect x="12" y="9" width="2" height="1" fill="#ffffff"/><rect x="14" y="9" width="1" height="1" fill="#000000"/><rect x="1" y="10" width="12" height="1" fill="#ffffff"/><rect x="13" y="10" width="2" height="1" fill="#000000"/><rect x="3" y="11" width="1" height="1" fill="#c0c0c0"/><rect x="4" y="11" width="1" height="1" fill="#ffffff"/><rect x="5" y="11" width="3" height="1" fill="#c0c0c0"/><rect x="8" y="11" width="1" height="1" fill="#000000"/><rect x="9" y="11" width="3" height="1" fill="#c0c0c0"/><rect x="3" y="12" width="10" height="1" fill="#c0c0c0"/><rect x="2" y="13" width="1" height="1" fill="#000000"/><rect x="3" y="13" width="10" height="1" fill="#c0c0c0"/><rect x="13" y="13" width="1" height="1" fill="#000000"/><rect x="4" y="14" width="7" height="1" fill="#000000"/></svg><svg class="ic" style="left:546px;top:43px" width="16" height="16" shape-rendering="crispEdges"><rect x="6" y="1" width="3" height="1" fill="#000000"/><rect x="5" y="2" width="1" height="1" fill="#000000"/><rect x="6" y="2" width="3" height="1" fill="#ff0000"/><rect x="9" y="2" width="1" height="1" fill="#000000"/><rect x="12" y="2" width="3" height="1" fill="#000000"/><rect x="4" y="3" width="1" height="1" fill="#000000"/><rect x="5" y="3" width="5" height="1" fill="#ff0000"/><rect x="10" y="3" width="1" height="1" fill="#000000"/><rect x="13" y="3" width="2" height="1" fill="#000000"/><rect x="3" y="4" width="1" height="1" fill="#000000"/><rect x="4" y="4" width="7" height="1" fill="#ff0000"/><rect x="11" y="4" width="1" height="1" fill="#000000"/><rect x="14" y="4" width="1" height="1" fill="#000000"/><rect x="2" y="5" width="1" height="1" fill="#000000"/><rect x="3" y="5" width="9" height="1" fill="#ff0000"/><rect x="12" y="5" width="1" height="1" fill="#000000"/><rect x="1" y="6" width="1" height="1" fill="#000000"/><rect x="2" y="6" width="12" height="1" fill="#ff0000"/><rect x="14" y="6" width="1" height="1" fill="#000000"/><rect x="1" y="7" width="1" height="1" fill="#000000"/><rect x="2" y="7" width="13" height="1" fill="#ff0000"/><rect x="1" y="8" width="1" height="1" fill="#000000"/><rect x="2" y="8" width="2" height="1" fill="#008000"/><rect x="4" y="8" width="9" height="1" fill="#000000"/><rect x="13" y="8" width="2" height="1" fill="#008000"/><rect x="2" y="9" width="1" height="1" fill="#000000"/><rect x="3" y="9" width="10" height="1" fill="#008000"/><rect x="13" y="9" width="1" height="1" fill="#000000"/><rect x="4" y="10" width="1" height="1" fill="#000000"/><rect x="5" y="10" width="7" height="1" fill="#008000"/><rect x="12" y="10" width="1" height="1" fill="#000000"/><rect x="5" y="11" width="1" height="1" fill="#000000"/><rect x="6" y="11" width="5" height="1" fill="#008000"/><rect x="11" y="11" width="1" height="1" fill="#000000"/><rect x="6" y="12" width="1" height="1" fill="#000000"/><rect x="7" y="12" width="3" height="1" fill="#008000"/><rect x="10" y="12" width="1" height="1" fill="#000000"/><rect x="7" y="13" width="2" height="1" fill="#008000"/><rect x="9" y="13" width="1" height="1" fill="#000000"/><rect x="7" y="14" width="2" height="1" fill="#000000"/><rect x="7" y="15" width="1" height="1" fill="#000000"/></svg><svg class="ic" style="left:613px;top:43px" width="16" height="16" shape-rendering="crispEdges"><rect x="3" y="0" width="13" height="1" fill="#000000"/><rect x="1" y="1" width="6" height="1" fill="#ffffff"/><rect x="7" y="1" width="6" height="1" fill="#000000"/><rect x="13" y="1" width="1" height="1" fill="#ffffff"/><rect x="14" y="1" width="1" height="1" fill="#000000"/><rect x="15" y="1" width="1" height="1" fill="#ffffff"/><rect x="1" y="2" width="6" height="1" fill="#ffffff"/><rect x="7" y="2" width="1" height="1" fill="#000000"/><rect x="8" y="2" width="1" height="1" fill="#ff0000"/><rect x="9" y="2" width="4" height="1" fill="#ffffff"/><rect x="13" y="2" width="1" height="1" fill="#000000"/><rect x="14" y="2" width="1" height="1" fill="#008000"/><rect x="15" y="2" width="1" height="1" fill="#ffffff"/><rect x="0" y="3" width="3" height="1" fill="#000000"/><rect x="3" y="3" width="1" height="1" fill="#ffffff"/><rect x="4" y="3" width="1" height="1" fill="#000000"/><rect x="5" y="3" width="2" height="1" fill="#ffffff"/><rect x="7" y="3" width="1" height="1" fill="#000000"/><rect x="8" y="3" width="1" height="1" fill="#ffff00"/><rect x="9" y="3" width="3" height="1" fill="#ffffff"/><rect x="12" y="3" width="1" height="1" fill="#ffff00"/><rect x="13" y="3" width="1" height="1" fill="#000000"/><rect x="14" y="3" width="2" height="1" fill="#ffffff"/><rect x="0" y="4" width="1" height="1" fill="#000000"/><rect x="1" y="4" width="7" height="1" fill="#ffffff"/><rect x="8" y="4" width="2" height="1" fill="#ffff00"/><rect x="10" y="4" width="1" height="1" fill="#ffffff"/><rect x="11" y="4" width="2" height="1" fill="#ffff00"/><rect x="13" y="4" width="3" height="1" fill="#ffffff"/><rect x="0" y="5" width="1" height="1" fill="#000000"/><rect x="1" y="5" width="3" height="1" fill="#ffffff"/><rect x="4" y="5" width="2" height="1" fill="#000000"/><rect x="6" y="5" width="1" height="1" fill="#ffffff"/><rect x="7" y="5" width="2" height="1" fill="#ffff00"/><rect x="9" y="5" width="2" height="1" fill="#000000"/><rect x="11" y="5" width="2" height="1" fill="#ff0000"/><rect x="13" y="5" width="1" height="1" fill="#000000"/><rect x="14" y="5" width="2" height="1" fill="#ffffff"/><rect x="0" y="6" width="1" height="1" fill="#000000"/><rect x="1" y="6" width="2" height="1" fill="#ffffff"/><rect x="3" y="6" width="1" height="1" fill="#000000"/><rect x="4" y="6" width="1" height="1" fill="#00ffff"/><rect x="5" y="6" width="1" height="1" fill="#ffff00"/><rect x="6" y="6" width="1" height="1" fill="#000000"/><rect x="7" y="6" width="2" height="1" fill="#ffff00"/><rect x="9" y="6" width="1" height="1" fill="#000000"/><rect x="10" y="6" width="1" height="1" fill="#00ffff"/><rect x="11" y="6" width="1" height="1" fill="#ff0000"/><rect x="12" y="6" width="1" height="1" fill="#000000"/><rect x="13" y="6" width="3" height="1" fill="#ffffff"/><rect x="0" y="7" width="1" height="1" fill="#000000"/><rect x="1" y="7" width="2" height="1" fill="#ffffff"/><rect x="3" y="7" width="1" height="1" fill="#000000"/><rect x="4" y="7" width="1" height="1" fill="#00ffff"/><rect x="5" y="7" width="3" height="1" fill="#ffff00"/><rect x="8" y="7" width="2" height="1" fill="#000000"/><rect x="10" y="7" width="1" height="1" fill="#00ffff"/><rect x="11" y="7" width="5" height="1" fill="#ffffff"/><rect x="0" y="8" width="1" height="1" fill="#000000"/><rect x="1" y="8" width="4" height="1" fill="#ffffff"/><rect x="5" y="8" width="2" height="1" fill="#ff0000"/><rect x="7" y="8" width="1" height="1" fill="#ffff00"/><rect x="8" y="8" width="1" height="1" fill="#000000"/><rect x="9" y="8" width="7" height="1" fill="#ffffff"/><rect x="0" y="9" width="1" height="1" fill="#000000"/><rect x="1" y="9" width="3" height="1" fill="#ffffff"/><rect x="4" y="9" width="1" height="1" fill="#ffff00"/><rect x="5" y="9" width="2" height="1" fill="#ff0000"/><rect x="7" y="9" width="2" height="1" fill="#000000"/><rect x="9" y="9" width="7" height="1" fill="#ffffff"/><rect x="0" y="10" width="1" height="1" fill="#000000"/><rect x="1" y="10" width="3" height="1" fill="#ffffff"/><rect x="4" y="10" width="2" height="1" fill="#ffff00"/><rect x="6" y="10" width="4" height="1" fill="#000000"/><rect x="10" y="10" width="6" height="1" fill="#ffffff"/><rect x="0" y="11" width="1" height="1" fill="#000000"/><rect x="1" y="11" width="2" height="1" fill="#ffffff"/><rect x="3" y="11" width="2" height="1" fill="#ffff00"/><rect x="5" y="11" width="1" height="1" fill="#ffffff"/><rect x="6" y="11" width="3" height="1" fill="#000000"/><rect x="9" y="11" width="1" height="1" fill="#c0c0c0"/><rect x="10" y="11" width="1" height="1" fill="#000000"/><rect x="11" y="11" width="5" height="1" fill="#ffffff"/><rect x="0" y="12" width="1" height="1" fill="#000000"/><rect x="1" y="12" width="1" height="1" fill="#ffffff"/><rect x="2" y="12" width="2" height="1" fill="#ffff00"/><rect x="4" y="12" width="1" height="1" fill="#ffffff"/><rect x="5" y="12" width="3" height="1" fill="#000000"/><rect x="8" y="12" width="1" height="1" fill="#ffffff"/><rect x="9" y="12" width="1" height="1" fill="#c0c0c0"/><rect x="10" y="12" width="1" height="1" fill="#000000"/><rect x="11" y="12" width="5" height="1" fill="#ffffff"/><rect x="0" y="13" width="1" height="1" fill="#000000"/><rect x="1" y="13" width="2" height="1" fill="#ffff00"/><rect x="3" y="13" width="2" height="1" fill="#ffffff"/><rect x="5" y="13" width="3" height="1" fill="#000000"/><rect x="8" y="13" width="1" height="1" fill="#ffffff"/><rect x="9" y="13" width="1" height="1" fill="#c0c0c0"/><rect x="10" y="13" width="1" height="1" fill="#000000"/><rect x="11" y="13" width="5" height="1" fill="#ffffff"/><rect x="0" y="14" width="2" height="1" fill="#ff00ff"/><rect x="2" y="14" width="2" height="1" fill="#ffffff"/><rect x="4" y="14" width="4" height="1" fill="#000000"/><rect x="8" y="14" width="1" height="1" fill="#ffffff"/><rect x="9" y="14" width="3" height="1" fill="#000000"/><rect x="12" y="14" width="4" height="1" fill="#ffffff"/><rect x="0" y="15" width="1" height="1" fill="#000000"/><rect x="1" y="15" width="1" height="1" fill="#ff00ff"/><rect x="2" y="15" width="1" height="1" fill="#ffffff"/><rect x="3" y="15" width="9" height="1" fill="#000000"/><rect x="12" y="15" width="4" height="1" fill="#ffffff"/></svg><svg class="ic" style="left:696px;top:46px" width="12" height="13" shape-rendering="crispEdges"><rect x="4" y="0" width="1" height="1" fill="#000000"/><rect x="6" y="0" width="1" height="1" fill="#000000"/><rect x="4" y="1" width="2" height="1" fill="#ff6070"/><rect x="6" y="1" width="2" height="1" fill="#000000"/><rect x="3" y="2" width="1" height="1" fill="#000000"/><rect x="4" y="2" width="2" height="1" fill="#ff6070"/><rect x="6" y="2" width="2" height="1" fill="#000000"/><rect x="3" y="3" width="1" height="1" fill="#000000"/><rect x="4" y="3" width="2" height="1" fill="#ff6070"/><rect x="6" y="3" width="2" height="1" fill="#000000"/><rect x="3" y="4" width="1" height="1" fill="#000000"/><rect x="4" y="4" width="2" height="1" fill="#ff6070"/><rect x="6" y="4" width="2" height="1" fill="#000000"/><rect x="4" y="5" width="3" height="1" fill="#000000"/><rect x="0" y="6" width="1" height="1" fill="#000000"/><rect x="1" y="6" width="1" height="1" fill="#008000"/><rect x="2" y="6" width="1" height="1" fill="#000000"/><rect x="5" y="6" width="1" height="1" fill="#008000"/><rect x="8" y="6" width="1" height="1" fill="#000000"/><rect x="9" y="6" width="1" height="1" fill="#008000"/><rect x="10" y="6" width="1" height="1" fill="#000000"/><rect x="1" y="7" width="1" height="1" fill="#000000"/><rect x="2" y="7" width="1" height="1" fill="#008000"/><rect x="3" y="7" width="1" height="1" fill="#000000"/><rect x="5" y="7" width="1" height="1" fill="#008000"/><rect x="7" y="7" width="1" height="1" fill="#000000"/><rect x="8" y="7" width="2" height="1" fill="#008000"/><rect x="10" y="7" width="1" height="1" fill="#000000"/><rect x="1" y="8" width="1" height="1" fill="#000000"/><rect x="2" y="8" width="2" height="1" fill="#008000"/><rect x="4" y="8" width="1" height="1" fill="#000000"/><rect x="5" y="8" width="1" height="1" fill="#008000"/><rect x="6" y="8" width="1" height="1" fill="#000000"/><rect x="7" y="8" width="2" height="1" fill="#008000"/><rect x="9" y="8" width="1" height="1" fill="#000000"/><rect x="2" y="9" width="1" height="1" fill="#000000"/><rect x="3" y="9" width="5" height="1" fill="#008000"/><rect x="8" y="9" width="1" height="1" fill="#000000"/><rect x="2" y="10" width="1" height="1" fill="#000000"/><rect x="3" y="10" width="5" height="1" fill="#008000"/><rect x="8" y="10" width="1" height="1" fill="#000000"/><rect x="3" y="11" width="1" height="1" fill="#000000"/><rect x="4" y="11" width="3" height="1" fill="#008000"/><rect x="7" y="11" width="1" height="1" fill="#000000"/><rect x="4" y="12" width="4" height="1" fill="#000000"/></svg><div class="r" style="left:0px;top:79px;width:1279px;height:1px;background:#808080"></div><div class="r" style="left:0px;top:79px;width:1px;height:620px;background:#808080"></div><div class="r" style="left:0px;top:698px;width:1279px;height:1px;background:#808080"></div><div class="r" style="left:1278px;top:79px;width:1px;height:620px;background:#808080"></div><div class="r" style="left:1px;top:80px;width:1277px;height:1px;background:#ffffff"></div><div class="r" style="left:1px;top:80px;width:1px;height:618px;background:#ffffff"></div><div class="r" style="left:1px;top:699px;width:1279px;height:1px;background:#ffffff"></div><div class="r" style="left:1279px;top:79px;width:1px;height:621px;background:#ffffff"></div><div class="r" style="left:4px;top:89px;width:1272px;height:186px;background:#CCE8CF"></div><div class="r" style="left:2px;top:87px;width:1276px;height:1px;background:#808080"></div><div class="r" style="left:2px;top:87px;width:1px;height:190px;background:#808080"></div><div class="r" style="left:3px;top:88px;width:1274px;height:1px;background:#404040"></div><div class="r" style="left:3px;top:88px;width:1px;height:188px;background:#404040"></div><div class="r" style="left:2px;top:276px;width:1276px;height:1px;background:#ffffff"></div><div class="r" style="left:1277px;top:87px;width:1px;height:190px;background:#ffffff"></div><div class="r" style="left:3px;top:275px;width:1274px;height:1px;background:#D4D0C8"></div><div class="r" style="left:1276px;top:88px;width:1px;height:188px;background:#D4D0C8"></div><svg class="ic" style="left:23px;top:89px" width="19" height="19" viewBox="0 0 19 19"><defs><radialGradient id="qg" cx="0.35" cy="0.3" r="0.8"><stop offset="0" stop-color="#6f9ae8"/><stop offset="1" stop-color="#1f4fb8"/></radialGradient></defs><circle cx="9.6" cy="9.6" r="7.1" fill="none" stroke="#283048" stroke-width="0.9" stroke-dasharray="1.1 1.3"/><circle cx="9" cy="9.3" r="7" fill="#fff"/><circle cx="9" cy="9.3" r="5.8" fill="url(#qg)"/><path d="M6.9 7.2 Q6.9 5.2 9.1 5.2 Q11.4 5.2 11.4 7.1 Q11.4 8.3 10.1 9 Q9.3 9.5 9.3 10.6" stroke="#fff" stroke-width="1.7" fill="none"/><rect x="8.2" y="12.3" width="2" height="1.6" fill="#fff"/></svg><svg class="ic" style="left:84px;top:91px" width="16" height="16" shape-rendering="crispEdges"><rect x="5" y="0" width="2" height="1" fill="#800000"/><rect x="7" y="0" width="2" height="1" fill="#ff0000"/><rect x="9" y="0" width="2" height="1" fill="#800000"/><rect x="3" y="1" width="2" height="1" fill="#800000"/><rect x="5" y="1" width="6" height="1" fill="#ff0000"/><rect x="11" y="1" width="2" height="1" fill="#800000"/><rect x="2" y="2" width="1" height="1" fill="#800000"/><rect x="3" y="2" width="10" height="1" fill="#ff0000"/><rect x="13" y="2" width="1" height="1" fill="#7a8a80"/><rect x="1" y="3" width="1" height="1" fill="#800000"/><rect x="2" y="3" width="3" height="1" fill="#ff0000"/><rect x="5" y="3" width="1" height="1" fill="#ffffff"/><rect x="6" y="3" width="8" height="1" fill="#ff0000"/><rect x="14" y="3" width="1" height="1" fill="#7a8a80"/><rect x="1" y="4" width="1" height="1" fill="#800000"/><rect x="2" y="4" width="2" height="1" fill="#ff0000"/><rect x="4" y="4" width="3" height="1" fill="#ffffff"/><rect x="7" y="4" width="3" height="1" fill="#ff0000"/><rect x="10" y="4" width="2" height="1" fill="#ffffff"/><rect x="12" y="4" width="2" height="1" fill="#ff0000"/><rect x="14" y="4" width="1" height="1" fill="#7a8a80"/><rect x="0" y="5" width="1" height="1" fill="#800000"/><rect x="1" y="5" width="4" height="1" fill="#ff0000"/><rect x="5" y="5" width="3" height="1" fill="#ffffff"/><rect x="8" y="5" width="1" height="1" fill="#ff0000"/><rect x="9" y="5" width="3" height="1" fill="#ffffff"/><rect x="12" y="5" width="3" height="1" fill="#ff0000"/><rect x="15" y="5" width="1" height="1" fill="#7a8a80"/><rect x="0" y="6" width="1" height="1" fill="#800000"/><rect x="1" y="6" width="5" height="1" fill="#ff0000"/><rect x="6" y="6" width="5" height="1" fill="#ffffff"/><rect x="11" y="6" width="4" height="1" fill="#ff0000"/><rect x="15" y="6" width="1" height="1" fill="#7a8a80"/><rect x="0" y="7" width="1" height="1" fill="#800000"/><rect x="1" y="7" width="6" height="1" fill="#ff0000"/><rect x="7" y="7" width="3" height="1" fill="#ffffff"/><rect x="10" y="7" width="5" height="1" fill="#ff0000"/><rect x="15" y="7" width="1" height="1" fill="#7a8a80"/><rect x="0" y="8" width="1" height="1" fill="#800000"/><rect x="1" y="8" width="5" height="1" fill="#ff0000"/><rect x="6" y="8" width="5" height="1" fill="#ffffff"/><rect x="11" y="8" width="4" height="1" fill="#ff0000"/><rect x="15" y="8" width="1" height="1" fill="#7a8a80"/><rect x="0" y="9" width="1" height="1" fill="#800000"/><rect x="1" y="9" width="4" height="1" fill="#ff0000"/><rect x="5" y="9" width="3" height="1" fill="#ffffff"/><rect x="8" y="9" width="1" height="1" fill="#ff0000"/><rect x="9" y="9" width="3" height="1" fill="#ffffff"/><rect x="12" y="9" width="3" height="1" fill="#ff0000"/><rect x="15" y="9" width="1" height="1" fill="#7a8a80"/><rect x="1" y="10" width="1" height="1" fill="#800000"/><rect x="2" y="10" width="3" height="1" fill="#ff0000"/><rect x="5" y="10" width="2" height="1" fill="#ffffff"/><rect x="7" y="10" width="3" height="1" fill="#ff0000"/><rect x="10" y="10" width="2" height="1" fill="#ffffff"/><rect x="12" y="10" width="2" height="1" fill="#ff0000"/><rect x="14" y="10" width="1" height="1" fill="#7a8a80"/><rect x="1" y="11" width="1" height="1" fill="#800000"/><rect x="2" y="11" width="12" height="1" fill="#ff0000"/><rect x="14" y="11" width="1" height="1" fill="#7a8a80"/><rect x="2" y="12" width="1" height="1" fill="#800000"/><rect x="3" y="12" width="9" height="1" fill="#ff0000"/><rect x="12" y="12" width="1" height="1" fill="#800000"/><rect x="13" y="12" width="1" height="1" fill="#7a8a80"/><rect x="3" y="13" width="2" height="1" fill="#800000"/><rect x="5" y="13" width="5" height="1" fill="#ff0000"/><rect x="10" y="13" width="2" height="1" fill="#800000"/><rect x="12" y="13" width="2" height="1" fill="#7a8a80"/><rect x="5" y="14" width="5" height="1" fill="#800000"/><rect x="10" y="14" width="2" height="1" fill="#7a8a80"/><rect x="7" y="15" width="3" height="1" fill="#7a8a80"/></svg><svg class="ic" style="left:143px;top:91px" width="16" height="16" shape-rendering="crispEdges"><rect x="5" y="0" width="2" height="1" fill="#800000"/><rect x="7" y="0" width="2" height="1" fill="#ff0000"/><rect x="9" y="0" width="2" height="1" fill="#800000"/><rect x="3" y="1" width="2" height="1" fill="#800000"/><rect x="5" y="1" width="6" height="1" fill="#ff0000"/><rect x="11" y="1" width="2" height="1" fill="#800000"/><rect x="2" y="2" width="1" height="1" fill="#800000"/><rect x="3" y="2" width="10" height="1" fill="#ff0000"/><rect x="13" y="2" width="1" height="1" fill="#7a8a80"/><rect x="1" y="3" width="1" height="1" fill="#800000"/><rect x="2" y="3" width="3" height="1" fill="#ff0000"/><rect x="5" y="3" width="1" height="1" fill="#ffffff"/><rect x="6" y="3" width="8" height="1" fill="#ff0000"/><rect x="14" y="3" width="1" height="1" fill="#7a8a80"/><rect x="1" y="4" width="1" height="1" fill="#800000"/><rect x="2" y="4" width="2" height="1" fill="#ff0000"/><rect x="4" y="4" width="3" height="1" fill="#ffffff"/><rect x="7" y="4" width="3" height="1" fill="#ff0000"/><rect x="10" y="4" width="2" height="1" fill="#ffffff"/><rect x="12" y="4" width="2" height="1" fill="#ff0000"/><rect x="14" y="4" width="1" height="1" fill="#7a8a80"/><rect x="0" y="5" width="1" height="1" fill="#800000"/><rect x="1" y="5" width="4" height="1" fill="#ff0000"/><rect x="5" y="5" width="3" height="1" fill="#ffffff"/><rect x="8" y="5" width="1" height="1" fill="#ff0000"/><rect x="9" y="5" width="3" height="1" fill="#ffffff"/><rect x="12" y="5" width="3" height="1" fill="#ff0000"/><rect x="15" y="5" width="1" height="1" fill="#7a8a80"/><rect x="0" y="6" width="1" height="1" fill="#800000"/><rect x="1" y="6" width="5" height="1" fill="#ff0000"/><rect x="6" y="6" width="5" height="1" fill="#ffffff"/><rect x="11" y="6" width="4" height="1" fill="#ff0000"/><rect x="15" y="6" width="1" height="1" fill="#7a8a80"/><rect x="0" y="7" width="1" height="1" fill="#800000"/><rect x="1" y="7" width="6" height="1" fill="#ff0000"/><rect x="7" y="7" width="3" height="1" fill="#ffffff"/><rect x="10" y="7" width="5" height="1" fill="#ff0000"/><rect x="15" y="7" width="1" height="1" fill="#7a8a80"/><rect x="0" y="8" width="1" height="1" fill="#800000"/><rect x="1" y="8" width="5" height="1" fill="#ff0000"/><rect x="6" y="8" width="5" height="1" fill="#ffffff"/><rect x="11" y="8" width="4" height="1" fill="#ff0000"/><rect x="15" y="8" width="1" height="1" fill="#7a8a80"/><rect x="0" y="9" width="1" height="1" fill="#800000"/><rect x="1" y="9" width="4" height="1" fill="#ff0000"/><rect x="5" y="9" width="3" height="1" fill="#ffffff"/><rect x="8" y="9" width="1" height="1" fill="#ff0000"/><rect x="9" y="9" width="3" height="1" fill="#ffffff"/><rect x="12" y="9" width="3" height="1" fill="#ff0000"/><rect x="15" y="9" width="1" height="1" fill="#7a8a80"/><rect x="1" y="10" width="1" height="1" fill="#800000"/><rect x="2" y="10" width="3" height="1" fill="#ff0000"/><rect x="5" y="10" width="2" height="1" fill="#ffffff"/><rect x="7" y="10" width="3" height="1" fill="#ff0000"/><rect x="10" y="10" width="2" height="1" fill="#ffffff"/><rect x="12" y="10" width="2" height="1" fill="#ff0000"/><rect x="14" y="10" width="1" height="1" fill="#7a8a80"/><rect x="1" y="11" width="1" height="1" fill="#800000"/><rect x="2" y="11" width="12" height="1" fill="#ff0000"/><rect x="14" y="11" width="1" height="1" fill="#7a8a80"/><rect x="2" y="12" width="1" height="1" fill="#800000"/><rect x="3" y="12" width="9" height="1" fill="#ff0000"/><rect x="12" y="12" width="1" height="1" fill="#800000"/><rect x="13" y="12" width="1" height="1" fill="#7a8a80"/><rect x="3" y="13" width="2" height="1" fill="#800000"/><rect x="5" y="13" width="5" height="1" fill="#ff0000"/><rect x="10" y="13" width="2" height="1" fill="#800000"/><rect x="12" y="13" width="2" height="1" fill="#7a8a80"/><rect x="5" y="14" width="5" height="1" fill="#800000"/><rect x="10" y="14" width="2" height="1" fill="#7a8a80"/><rect x="7" y="15" width="3" height="1" fill="#7a8a80"/></svg><svg class="ic" style="left:202px;top:91px" width="16" height="16" shape-rendering="crispEdges"><rect x="5" y="0" width="2" height="1" fill="#800000"/><rect x="7" y="0" width="2" height="1" fill="#ff0000"/><rect x="9" y="0" width="2" height="1" fill="#800000"/><rect x="3" y="1" width="2" height="1" fill="#800000"/><rect x="5" y="1" width="6" height="1" fill="#ff0000"/><rect x="11" y="1" width="2" height="1" fill="#800000"/><rect x="2" y="2" width="1" height="1" fill="#800000"/><rect x="3" y="2" width="10" height="1" fill="#ff0000"/><rect x="13" y="2" width="1" height="1" fill="#7a8a80"/><rect x="1" y="3" width="1" height="1" fill="#800000"/><rect x="2" y="3" width="3" height="1" fill="#ff0000"/><rect x="5" y="3" width="1" height="1" fill="#ffffff"/><rect x="6" y="3" width="8" height="1" fill="#ff0000"/><rect x="14" y="3" width="1" height="1" fill="#7a8a80"/><rect x="1" y="4" width="1" height="1" fill="#800000"/><rect x="2" y="4" width="2" height="1" fill="#ff0000"/><rect x="4" y="4" width="3" height="1" fill="#ffffff"/><rect x="7" y="4" width="3" height="1" fill="#ff0000"/><rect x="10" y="4" width="2" height="1" fill="#ffffff"/><rect x="12" y="4" width="2" height="1" fill="#ff0000"/><rect x="14" y="4" width="1" height="1" fill="#7a8a80"/><rect x="0" y="5" width="1" height="1" fill="#800000"/><rect x="1" y="5" width="4" height="1" fill="#ff0000"/><rect x="5" y="5" width="3" height="1" fill="#ffffff"/><rect x="8" y="5" width="1" height="1" fill="#ff0000"/><rect x="9" y="5" width="3" height="1" fill="#ffffff"/><rect x="12" y="5" width="3" height="1" fill="#ff0000"/><rect x="15" y="5" width="1" height="1" fill="#7a8a80"/><rect x="0" y="6" width="1" height="1" fill="#800000"/><rect x="1" y="6" width="5" height="1" fill="#ff0000"/><rect x="6" y="6" width="5" height="1" fill="#ffffff"/><rect x="11" y="6" width="4" height="1" fill="#ff0000"/><rect x="15" y="6" width="1" height="1" fill="#7a8a80"/><rect x="0" y="7" width="1" height="1" fill="#800000"/><rect x="1" y="7" width="6" height="1" fill="#ff0000"/><rect x="7" y="7" width="3" height="1" fill="#ffffff"/><rect x="10" y="7" width="5" height="1" fill="#ff0000"/><rect x="15" y="7" width="1" height="1" fill="#7a8a80"/><rect x="0" y="8" width="1" height="1" fill="#800000"/><rect x="1" y="8" width="5" height="1" fill="#ff0000"/><rect x="6" y="8" width="5" height="1" fill="#ffffff"/><rect x="11" y="8" width="4" height="1" fill="#ff0000"/><rect x="15" y="8" width="1" height="1" fill="#7a8a80"/><rect x="0" y="9" width="1" height="1" fill="#800000"/><rect x="1" y="9" width="4" height="1" fill="#ff0000"/><rect x="5" y="9" width="3" height="1" fill="#ffffff"/><rect x="8" y="9" width="1" height="1" fill="#ff0000"/><rect x="9" y="9" width="3" height="1" fill="#ffffff"/><rect x="12" y="9" width="3" height="1" fill="#ff0000"/><rect x="15" y="9" width="1" height="1" fill="#7a8a80"/><rect x="1" y="10" width="1" height="1" fill="#800000"/><rect x="2" y="10" width="3" height="1" fill="#ff0000"/><rect x="5" y="10" width="2" height="1" fill="#ffffff"/><rect x="7" y="10" width="3" height="1" fill="#ff0000"/><rect x="10" y="10" width="2" height="1" fill="#ffffff"/><rect x="12" y="10" width="2" height="1" fill="#ff0000"/><rect x="14" y="10" width="1" height="1" fill="#7a8a80"/><rect x="1" y="11" width="1" height="1" fill="#800000"/><rect x="2" y="11" width="12" height="1" fill="#ff0000"/><rect x="14" y="11" width="1" height="1" fill="#7a8a80"/><rect x="2" y="12" width="1" height="1" fill="#800000"/><rect x="3" y="12" width="9" height="1" fill="#ff0000"/><rect x="12" y="12" width="1" height="1" fill="#800000"/><rect x="13" y="12" width="1" height="1" fill="#7a8a80"/><rect x="3" y="13" width="2" height="1" fill="#800000"/><rect x="5" y="13" width="5" height="1" fill="#ff0000"/><rect x="10" y="13" width="2" height="1" fill="#800000"/><rect x="12" y="13" width="2" height="1" fill="#7a8a80"/><rect x="5" y="14" width="5" height="1" fill="#800000"/><rect x="10" y="14" width="2" height="1" fill="#7a8a80"/><rect x="7" y="15" width="3" height="1" fill="#7a8a80"/></svg><svg class="ic" style="left:261px;top:91px" width="16" height="16" shape-rendering="crispEdges"><rect x="5" y="0" width="2" height="1" fill="#800000"/><rect x="7" y="0" width="2" height="1" fill="#ff0000"/><rect x="9" y="0" width="2" height="1" fill="#800000"/><rect x="3" y="1" width="2" height="1" fill="#800000"/><rect x="5" y="1" width="6" height="1" fill="#ff0000"/><rect x="11" y="1" width="2" height="1" fill="#800000"/><rect x="2" y="2" width="1" height="1" fill="#800000"/><rect x="3" y="2" width="10" height="1" fill="#ff0000"/><rect x="13" y="2" width="1" height="1" fill="#7a8a80"/><rect x="1" y="3" width="1" height="1" fill="#800000"/><rect x="2" y="3" width="3" height="1" fill="#ff0000"/><rect x="5" y="3" width="1" height="1" fill="#ffffff"/><rect x="6" y="3" width="8" height="1" fill="#ff0000"/><rect x="14" y="3" width="1" height="1" fill="#7a8a80"/><rect x="1" y="4" width="1" height="1" fill="#800000"/><rect x="2" y="4" width="2" height="1" fill="#ff0000"/><rect x="4" y="4" width="3" height="1" fill="#ffffff"/><rect x="7" y="4" width="3" height="1" fill="#ff0000"/><rect x="10" y="4" width="2" height="1" fill="#ffffff"/><rect x="12" y="4" width="2" height="1" fill="#ff0000"/><rect x="14" y="4" width="1" height="1" fill="#7a8a80"/><rect x="0" y="5" width="1" height="1" fill="#800000"/><rect x="1" y="5" width="4" height="1" fill="#ff0000"/><rect x="5" y="5" width="3" height="1" fill="#ffffff"/><rect x="8" y="5" width="1" height="1" fill="#ff0000"/><rect x="9" y="5" width="3" height="1" fill="#ffffff"/><rect x="12" y="5" width="3" height="1" fill="#ff0000"/><rect x="15" y="5" width="1" height="1" fill="#7a8a80"/><rect x="0" y="6" width="1" height="1" fill="#800000"/><rect x="1" y="6" width="5" height="1" fill="#ff0000"/><rect x="6" y="6" width="5" height="1" fill="#ffffff"/><rect x="11" y="6" width="4" height="1" fill="#ff0000"/><rect x="15" y="6" width="1" height="1" fill="#7a8a80"/><rect x="0" y="7" width="1" height="1" fill="#800000"/><rect x="1" y="7" width="6" height="1" fill="#ff0000"/><rect x="7" y="7" width="3" height="1" fill="#ffffff"/><rect x="10" y="7" width="5" height="1" fill="#ff0000"/><rect x="15" y="7" width="1" height="1" fill="#7a8a80"/><rect x="0" y="8" width="1" height="1" fill="#800000"/><rect x="1" y="8" width="5" height="1" fill="#ff0000"/><rect x="6" y="8" width="5" height="1" fill="#ffffff"/><rect x="11" y="8" width="4" height="1" fill="#ff0000"/><rect x="15" y="8" width="1" height="1" fill="#7a8a80"/><rect x="0" y="9" width="1" height="1" fill="#800000"/><rect x="1" y="9" width="4" height="1" fill="#ff0000"/><rect x="5" y="9" width="3" height="1" fill="#ffffff"/><rect x="8" y="9" width="1" height="1" fill="#ff0000"/><rect x="9" y="9" width="3" height="1" fill="#ffffff"/><rect x="12" y="9" width="3" height="1" fill="#ff0000"/><rect x="15" y="9" width="1" height="1" fill="#7a8a80"/><rect x="1" y="10" width="1" height="1" fill="#800000"/><rect x="2" y="10" width="3" height="1" fill="#ff0000"/><rect x="5" y="10" width="2" height="1" fill="#ffffff"/><rect x="7" y="10" width="3" height="1" fill="#ff0000"/><rect x="10" y="10" width="2" height="1" fill="#ffffff"/><rect x="12" y="10" width="2" height="1" fill="#ff0000"/><rect x="14" y="10" width="1" height="1" fill="#7a8a80"/><rect x="1" y="11" width="1" height="1" fill="#800000"/><rect x="2" y="11" width="12" height="1" fill="#ff0000"/><rect x="14" y="11" width="1" height="1" fill="#7a8a80"/><rect x="2" y="12" width="1" height="1" fill="#800000"/><rect x="3" y="12" width="9" height="1" fill="#ff0000"/><rect x="12" y="12" width="1" height="1" fill="#800000"/><rect x="13" y="12" width="1" height="1" fill="#7a8a80"/><rect x="3" y="13" width="2" height="1" fill="#800000"/><rect x="5" y="13" width="5" height="1" fill="#ff0000"/><rect x="10" y="13" width="2" height="1" fill="#800000"/><rect x="12" y="13" width="2" height="1" fill="#7a8a80"/><rect x="5" y="14" width="5" height="1" fill="#800000"/><rect x="10" y="14" width="2" height="1" fill="#7a8a80"/><rect x="7" y="15" width="3" height="1" fill="#7a8a80"/></svg><div class="t d" style="left:16px;top:109px"><i>1</i><i>0</i><i>0</i><i>0</i><i>1</i></div><div class="t d" style="left:75px;top:109px"><i>1</i><i>0</i><i>0</i><i>0</i><i>2</i></div><div class="t d" style="left:134px;top:109px"><i>1</i><i>0</i><i>0</i><i>0</i><i>3</i></div><div class="t d" style="left:193px;top:109px"><i>1</i><i>0</i><i>0</i><i>0</i><i>4</i></div><div class="t d" style="left:252px;top:109px"><i>1</i><i>0</i><i>0</i><i>0</i><i>5</i></div><div class="r" style="left:4px;top:300px;width:1272px;height:396px;background:#CCE8CF"></div><div class="r" style="left:2px;top:280px;width:1276px;height:1px;background:#808080"></div><div class="r" style="left:2px;top:280px;width:1px;height:418px;background:#808080"></div><div class="r" style="left:3px;top:281px;width:1274px;height:1px;background:#404040"></div><div class="r" style="left:3px;top:281px;width:1px;height:416px;background:#404040"></div><div class="r" style="left:2px;top:697px;width:1276px;height:1px;background:#ffffff"></div><div class="r" style="left:1277px;top:280px;width:1px;height:418px;background:#ffffff"></div><div class="r" style="left:3px;top:696px;width:1274px;height:1px;background:#D4D0C8"></div><div class="r" style="left:1276px;top:281px;width:1px;height:416px;background:#D4D0C8"></div><div class="r" style="left:4px;top:298px;width:1272px;height:1px;background:#808080"></div><div class="r" style="left:4px;top:299px;width:1272px;height:1px;background:#ffffff"></div><div class="r" style="left:62px;top:282px;width:1px;height:16px;background:#808080"></div><div class="r" style="left:63px;top:282px;width:1px;height:18px;background:#ffffff"></div><div class="r" style="left:132px;top:282px;width:1px;height:16px;background:#808080"></div><div class="r" style="left:133px;top:282px;width:1px;height:18px;background:#ffffff"></div><div class="r" style="left:192px;top:282px;width:1px;height:16px;background:#808080"></div><div class="r" style="left:193px;top:282px;width:1px;height:18px;background:#ffffff"></div><div class="r" style="left:272px;top:282px;width:1px;height:16px;background:#808080"></div><div class="r" style="left:273px;top:282px;width:1px;height:18px;background:#ffffff"></div><div class="r" style="left:352px;top:282px;width:1px;height:16px;background:#808080"></div><div class="r" style="left:353px;top:282px;width:1px;height:18px;background:#ffffff"></div><div class="r" style="left:422px;top:282px;width:1px;height:16px;background:#808080"></div><div class="r" style="left:423px;top:282px;width:1px;height:18px;background:#ffffff"></div><div class="r" style="left:502px;top:282px;width:1px;height:16px;background:#808080"></div><div class="r" style="left:503px;top:282px;width:1px;height:18px;background:#ffffff"></div><div class="r" style="left:582px;top:282px;width:1px;height:16px;background:#808080"></div><div class="r" style="left:583px;top:282px;width:1px;height:18px;background:#ffffff"></div><div class="r" style="left:662px;top:282px;width:1px;height:16px;background:#808080"></div><div class="r" style="left:663px;top:282px;width:1px;height:18px;background:#ffffff"></div><div class="t h" style="left:10px;top:282px">机号</div><div class="t h" style="left:70px;top:282px">机器类型</div><div class="t h" style="left:140px;top:282px">卡号</div><div class="t h" style="left:200px;top:282px">姓名</div><div class="t h" style="left:280px;top:282px">日期</div><div class="t h" style="left:360px;top:282px">采集时间</div><div class="t h" style="left:430px;top:282px">消费类型</div><div class="t h" style="left:510px;top:282px">消费金额</div><div class="t h" style="left:590px;top:282px">卡上余额</div><div class="t d" style="left:8px;top:300px"><i>1</i><i>0</i><i>0</i><i>0</i><i>1</i></div><div class="t dc" style="left:70px;top:300px">节水机</div><div class="t d" style="left:140px;top:300px"><i>0</i><i>0</i><i>0</i><i>0</i><i>0</i><i>3</i></div><div class="t d" style="left:200px;top:300px"><i>0</i><i>0</i><i>0</i><i>0</i><i>0</i><i>3</i><i class="p"></i><i class="p"></i><i class="p"></i></div><div class="t d" style="left:280px;top:300px"><i>2</i><i>0</i><i>0</i><i>9</i><i>-</i><i>0</i><i class="p"></i><i class="p"></i><i class="p"></i></div><div class="t d" style="left:360px;top:300px"><i>0</i><i>9</i><i class="c"></i><i>2</i><i>3</i><i class="c"></i><i>0</i><i>0</i></div><div class="t dc" style="left:430px;top:300px">脱机计时</div><div class="t d" style="left:510px;top:300px"><i>0</i><i class="p"></i><i>2</i></div><div class="t d" style="left:590px;top:300px"><i>9</i><i>2</i><i class="p"></i><i>2</i></div><div class="t d" style="left:8px;top:315px"><i>1</i><i>0</i><i>0</i><i>0</i><i>1</i></div><div class="t dc" style="left:70px;top:315px">节水机</div><div class="t d" style="left:140px;top:315px"><i>0</i><i>0</i><i>0</i><i>0</i><i>0</i><i>3</i></div><div class="t d" style="left:200px;top:315px"><i>0</i><i>0</i><i>0</i><i>0</i><i>0</i><i>3</i><i class="p"></i><i class="p"></i><i class="p"></i></div><div class="t d" style="left:280px;top:315px"><i>2</i><i>0</i><i>0</i><i>9</i><i>-</i><i>0</i><i class="p"></i><i class="p"></i><i class="p"></i></div><div class="t d" style="left:360px;top:315px"><i>0</i><i>9</i><i class="c"></i><i>2</i><i>3</i><i class="c"></i><i>0</i><i>0</i></div><div class="t dc" style="left:430px;top:315px">脱机计时</div><div class="t d" style="left:510px;top:315px"><i>0</i><i class="p"></i><i>1</i></div><div class="t d" style="left:590px;top:315px"><i>9</i><i>2</i><i class="p"></i><i>4</i></div><div class="t d" style="left:8px;top:330px"><i>1</i><i>0</i><i>0</i><i>0</i><i>1</i></div><div class="t dc" style="left:70px;top:330px">节水机</div><div class="t d" style="left:140px;top:330px"><i>0</i><i>0</i><i>0</i><i>0</i><i>0</i><i>3</i></div><div class="t d" style="left:200px;top:330px"><i>0</i><i>0</i><i>0</i><i>0</i><i>0</i><i>3</i><i class="p"></i><i class="p"></i><i class="p"></i></div><div class="t d" style="left:280px;top:330px"><i>2</i><i>0</i><i>0</i><i>9</i><i>-</i><i>0</i><i class="p"></i><i class="p"></i><i class="p"></i></div><div class="t d" style="left:360px;top:330px"><i>0</i><i>9</i><i class="c"></i><i>2</i><i>2</i><i class="c"></i><i>0</i><i>0</i></div><div class="t dc" style="left:430px;top:330px">脱机计时</div><div class="t d" style="left:510px;top:330px"><i>0</i><i class="p"></i><i>3</i></div><div class="t d" style="left:590px;top:330px"><i>9</i><i>2</i><i class="p"></i><i>5</i></div><div class="t d" style="left:8px;top:345px"><i>1</i><i>0</i><i>0</i><i>0</i><i>1</i></div><div class="t dc" style="left:70px;top:345px">节水机</div><div class="t d" style="left:140px;top:345px"><i>0</i><i>0</i><i>0</i><i>0</i><i>0</i><i>3</i></div><div class="t d" style="left:200px;top:345px"><i>0</i><i>0</i><i>0</i><i>0</i><i>0</i><i>3</i><i class="p"></i><i class="p"></i><i class="p"></i></div><div class="t d" style="left:280px;top:345px"><i>2</i><i>0</i><i>0</i><i>9</i><i>-</i><i>0</i><i class="p"></i><i class="p"></i><i class="p"></i></div><div class="t d" style="left:360px;top:345px"><i>0</i><i>9</i><i class="c"></i><i>2</i><i>2</i><i class="c"></i><i>0</i><i>0</i></div><div class="t dc" style="left:430px;top:345px">脱机计时</div><div class="t d" style="left:510px;top:345px"><i>0</i><i class="p"></i><i>6</i></div><div class="t d" style="left:590px;top:345px"><i>9</i><i>2</i><i class="p"></i><i>8</i></div><div class="t d" style="left:8px;top:360px"><i>1</i><i>0</i><i>0</i><i>0</i><i>1</i></div><div class="t dc" style="left:70px;top:360px">节水机</div><div class="t d" style="left:140px;top:360px"><i>0</i><i>0</i><i>0</i><i>0</i><i>0</i><i>3</i></div><div class="t d" style="left:200px;top:360px"><i>0</i><i>0</i><i>0</i><i>0</i><i>0</i><i>3</i><i class="p"></i><i class="p"></i><i class="p"></i></div><div class="t d" style="left:280px;top:360px"><i>2</i><i>0</i><i>0</i><i>9</i><i>-</i><i>0</i><i class="p"></i><i class="p"></i><i class="p"></i></div><div class="t d" style="left:360px;top:360px"><i>0</i><i>9</i><i class="c"></i><i>2</i><i>2</i><i class="c"></i><i>0</i><i>0</i></div><div class="t dc" style="left:430px;top:360px">脱机计时</div><div class="t d" style="left:510px;top:360px"><i>0</i><i class="p"></i><i>1</i></div><div class="t d" style="left:590px;top:360px"><i>9</i><i>3</i><i class="p"></i><i>4</i></div><div class="t d" style="left:8px;top:375px"><i>1</i><i>0</i><i>0</i><i>0</i><i>1</i></div><div class="t dc" style="left:70px;top:375px">节水机</div><div class="t d" style="left:140px;top:375px"><i>0</i><i>0</i><i>0</i><i>0</i><i>0</i><i>3</i></div><div class="t d" style="left:200px;top:375px"><i>0</i><i>0</i><i>0</i><i>0</i><i>0</i><i>3</i><i class="p"></i><i class="p"></i><i class="p"></i></div><div class="t d" style="left:280px;top:375px"><i>2</i><i>0</i><i>0</i><i>9</i><i>-</i><i>0</i><i class="p"></i><i class="p"></i><i class="p"></i></div><div class="t d" style="left:360px;top:375px"><i>0</i><i>9</i><i class="c"></i><i>2</i><i>2</i><i class="c"></i><i>0</i><i>0</i></div><div class="t dc" style="left:430px;top:375px">脱机计时</div><div class="t d" style="left:510px;top:375px"><i>0</i><i class="p"></i><i>2</i></div><div class="t d" style="left:590px;top:375px"><i>9</i><i>3</i><i class="p"></i><i>5</i></div><div class="t d" style="left:8px;top:390px"><i>1</i><i>0</i><i>0</i><i>0</i><i>1</i></div><div class="t dc" style="left:70px;top:390px">节水机</div><div class="t d" style="left:140px;top:390px"><i>0</i><i>0</i><i>0</i><i>0</i><i>0</i><i>3</i></div><div class="t d" style="left:200px;top:390px"><i>0</i><i>0</i><i>0</i><i>0</i><i>0</i><i>3</i><i class="p"></i><i class="p"></i><i class="p"></i></div><div class="t d" style="left:280px;top:390px"><i>2</i><i>0</i><i>0</i><i>9</i><i>-</i><i>0</i><i class="p"></i><i class="p"></i><i class="p"></i></div><div class="t d" style="left:360px;top:390px"><i>0</i><i>9</i><i class="c"></i><i>2</i><i>2</i><i class="c"></i><i>0</i><i>0</i></div><div class="t dc" style="left:430px;top:390px">脱机计时</div><div class="t d" style="left:510px;top:390px"><i>0</i><i class="p"></i><i>2</i></div><div class="t d" style="left:590px;top:390px"><i>9</i><i>3</i><i class="p"></i><i>7</i></div><div class="t d" style="left:8px;top:405px"><i>1</i><i>0</i><i>0</i><i>0</i><i>1</i></div><div class="t dc" style="left:70px;top:405px">节水机</div><div class="t d" style="left:140px;top:405px"><i>0</i><i>0</i><i>0</i><i>0</i><i>0</i><i>3</i></div><div class="t d" style="left:200px;top:405px"><i>0</i><i>0</i><i>0</i><i>0</i><i>0</i><i>3</i><i class="p"></i><i class="p"></i><i class="p"></i></div><div class="t d" style="left:280px;top:405px"><i>2</i><i>0</i><i>0</i><i>9</i><i>-</i><i>0</i><i class="p"></i><i class="p"></i><i class="p"></i></div><div class="t d" style="left:360px;top:405px"><i>0</i><i>9</i><i class="c"></i><i>2</i><i>2</i><i class="c"></i><i>0</i><i>0</i></div><div class="t dc" style="left:430px;top:405px">脱机计时</div><div class="t d" style="left:510px;top:405px"><i>0</i><i class="p"></i><i>2</i></div><div class="t d" style="left:590px;top:405px"><i>9</i><i>3</i><i class="p"></i><i>9</i></div><div class="t d" style="left:8px;top:420px"><i>1</i><i>0</i><i>0</i><i>0</i><i>1</i></div><div class="t dc" style="left:70px;top:420px">节水机</div><div class="t d" style="left:140px;top:420px"><i>0</i><i>0</i><i>0</i><i>0</i><i>0</i><i>3</i></div><div class="t d" style="left:200px;top:420px"><i>0</i><i>0</i><i>0</i><i>0</i><i>0</i><i>3</i><i class="p"></i><i class="p"></i><i class="p"></i></div><div class="t d" style="left:280px;top:420px"><i>2</i><i>0</i><i>0</i><i>9</i><i>-</i><i>0</i><i class="p"></i><i class="p"></i><i class="p"></i></div><div class="t d" style="left:360px;top:420px"><i>0</i><i>9</i><i class="c"></i><i>2</i><i>2</i><i class="c"></i><i>0</i><i>0</i></div><div class="t dc" style="left:430px;top:420px">脱机计时</div><div class="t d" style="left:510px;top:420px"><i>0</i><i class="p"></i><i>2</i></div><div class="t d" style="left:590px;top:420px"><i>9</i><i>4</i><i class="p"></i><i>1</i></div><div class="t d" style="left:8px;top:435px"><i>1</i><i>0</i><i>0</i><i>0</i><i>1</i></div><div class="t dc" style="left:70px;top:435px">节水机</div><div class="t d" style="left:140px;top:435px"><i>0</i><i>0</i><i>0</i><i>0</i><i>0</i><i>3</i></div><div class="t d" style="left:200px;top:435px"><i>0</i><i>0</i><i>0</i><i>0</i><i>0</i><i>3</i><i class="p"></i><i class="p"></i><i class="p"></i></div><div class="t d" style="left:280px;top:435px"><i>2</i><i>0</i><i>0</i><i>9</i><i>-</i><i>0</i><i class="p"></i><i class="p"></i><i class="p"></i></div><div class="t d" style="left:360px;top:435px"><i>0</i><i>9</i><i class="c"></i><i>2</i><i>2</i><i class="c"></i><i>0</i><i>0</i></div><div class="t dc" style="left:430px;top:435px">脱机计时</div><div class="t d" style="left:510px;top:435px"><i>0</i><i class="p"></i><i>4</i></div><div class="t d" style="left:590px;top:435px"><i>9</i><i>4</i><i class="p"></i><i>3</i></div><div class="t d" style="left:8px;top:450px"><i>1</i><i>0</i><i>0</i><i>0</i><i>1</i></div><div class="t dc" style="left:70px;top:450px">节水机</div><div class="t d" style="left:140px;top:450px"><i>0</i><i>0</i><i>0</i><i>0</i><i>0</i><i>3</i></div><div class="t d" style="left:200px;top:450px"><i>0</i><i>0</i><i>0</i><i>0</i><i>0</i><i>3</i><i class="p"></i><i class="p"></i><i class="p"></i></div><div class="t d" style="left:280px;top:450px"><i>2</i><i>0</i><i>0</i><i>9</i><i>-</i><i>0</i><i class="p"></i><i class="p"></i><i class="p"></i></div><div class="t d" style="left:360px;top:450px"><i>0</i><i>9</i><i class="c"></i><i>2</i><i>2</i><i class="c"></i><i>0</i><i>0</i></div><div class="t dc" style="left:430px;top:450px">脱机计时</div><div class="t d" style="left:510px;top:450px"><i>1</i><i class="p"></i><i>6</i></div><div class="t d" style="left:590px;top:450px"><i>9</i><i>4</i><i class="p"></i><i>7</i></div><div class="t d" style="left:8px;top:465px"><i>1</i><i>0</i><i>0</i><i>0</i><i>1</i></div><div class="t dc" style="left:70px;top:465px">节水机</div><div class="t d" style="left:140px;top:465px"><i>0</i><i>0</i><i>0</i><i>0</i><i>0</i><i>3</i></div><div class="t d" style="left:200px;top:465px"><i>0</i><i>0</i><i>0</i><i>0</i><i>0</i><i>3</i><i class="p"></i><i class="p"></i><i class="p"></i></div><div class="t d" style="left:280px;top:465px"><i>2</i><i>0</i><i>0</i><i>9</i><i>-</i><i>0</i><i class="p"></i><i class="p"></i><i class="p"></i></div><div class="t d" style="left:360px;top:465px"><i>0</i><i>9</i><i class="c"></i><i>2</i><i>1</i><i class="c"></i><i>0</i><i>0</i></div><div class="t dc" style="left:430px;top:465px">脱机计时</div><div class="t d" style="left:510px;top:465px"><i>0</i><i class="p"></i><i>5</i></div><div class="t d" style="left:590px;top:465px"><i>9</i><i>6</i><i class="p"></i><i>3</i></div><div class="t d" style="left:8px;top:480px"><i>1</i><i>0</i><i>0</i><i>0</i><i>1</i></div><div class="t dc" style="left:70px;top:480px">节水机</div><div class="t d" style="left:140px;top:480px"><i>0</i><i>0</i><i>0</i><i>0</i><i>0</i><i>3</i></div><div class="t d" style="left:200px;top:480px"><i>0</i><i>0</i><i>0</i><i>0</i><i>0</i><i>3</i><i class="p"></i><i class="p"></i><i class="p"></i></div><div class="t d" style="left:280px;top:480px"><i>2</i><i>0</i><i>0</i><i>9</i><i>-</i><i>0</i><i class="p"></i><i class="p"></i><i class="p"></i></div><div class="t d" style="left:360px;top:480px"><i>0</i><i>9</i><i class="c"></i><i>2</i><i>1</i><i class="c"></i><i>0</i><i>0</i></div><div class="t dc" style="left:430px;top:480px">脱机计时</div><div class="t d" style="left:510px;top:480px"><i>0</i><i class="p"></i><i>2</i></div><div class="t d" style="left:590px;top:480px"><i>9</i><i>6</i><i class="p"></i><i>8</i></div><div class="t d" style="left:8px;top:495px"><i>1</i><i>0</i><i>0</i><i>0</i><i>1</i></div><div class="t dc" style="left:70px;top:495px">节水机</div><div class="t d" style="left:140px;top:495px"><i>0</i><i>0</i><i>0</i><i>0</i><i>0</i><i>3</i></div><div class="t d" style="left:200px;top:495px"><i>0</i><i>0</i><i>0</i><i>0</i><i>0</i><i>3</i><i class="p"></i><i class="p"></i><i class="p"></i></div><div class="t d" style="left:280px;top:495px"><i>2</i><i>0</i><i>0</i><i>9</i><i>-</i><i>0</i><i class="p"></i><i class="p"></i><i class="p"></i></div><div class="t d" style="left:360px;top:495px"><i>0</i><i>9</i><i class="c"></i><i>2</i><i>1</i><i class="c"></i><i>0</i><i>0</i></div><div class="t dc" style="left:430px;top:495px">脱机计时</div><div class="t d" style="left:510px;top:495px"><i>0</i><i class="p"></i><i>8</i></div><div class="t d" style="left:590px;top:495px"><i>9</i><i>7</i></div><div class="t d" style="left:8px;top:510px"><i>1</i><i>0</i><i>0</i><i>0</i><i>1</i></div><div class="t dc" style="left:70px;top:510px">节水机</div><div class="t d" style="left:140px;top:510px"><i>0</i><i>0</i><i>0</i><i>0</i><i>0</i><i>3</i></div><div class="t d" style="left:200px;top:510px"><i>0</i><i>0</i><i>0</i><i>0</i><i>0</i><i>3</i><i class="p"></i><i class="p"></i><i class="p"></i></div><div class="t d" style="left:280px;top:510px"><i>2</i><i>0</i><i>0</i><i>9</i><i>-</i><i>0</i><i class="p"></i><i class="p"></i><i class="p"></i></div><div class="t d" style="left:360px;top:510px"><i>0</i><i>9</i><i class="c"></i><i>2</i><i>0</i><i class="c"></i><i>0</i><i>0</i></div><div class="t dc" style="left:430px;top:510px">脱机计时</div><div class="t d" style="left:510px;top:510px"><i>2</i><i class="p"></i><i>2</i></div><div class="t d" style="left:590px;top:510px"><i>9</i><i>7</i><i class="p"></i><i>8</i></div><div class="r" style="left:0px;top:702px;width:150px;height:1px;background:#808080"></div><div class="r" style="left:0px;top:702px;width:1px;height:17px;background:#808080"></div><div class="r" style="left:0px;top:718px;width:150px;height:1px;background:#ffffff"></div><div class="r" style="left:149px;top:702px;width:1px;height:17px;background:#ffffff"></div><div class="r" style="left:152px;top:702px;width:198px;height:1px;background:#808080"></div><div class="r" style="left:152px;top:702px;width:1px;height:17px;background:#808080"></div><div class="r" style="left:152px;top:718px;width:198px;height:1px;background:#ffffff"></div><div class="r" style="left:349px;top:702px;width:1px;height:17px;background:#ffffff"></div><div class="r" style="left:352px;top:702px;width:148px;height:1px;background:#808080"></div><div class="r" style="left:352px;top:702px;width:1px;height:17px;background:#808080"></div><div class="r" style="left:352px;top:718px;width:148px;height:1px;background:#ffffff"></div><div class="r" style="left:499px;top:702px;width:1px;height:17px;background:#ffffff"></div><div class="r" style="left:502px;top:702px;width:198px;height:1px;background:#808080"></div><div class="r" style="left:502px;top:702px;width:1px;height:17px;background:#808080"></div><div class="r" style="left:502px;top:718px;width:198px;height:1px;background:#ffffff"></div><div class="r" style="left:699px;top:702px;width:1px;height:17px;background:#ffffff"></div><div class="r" style="left:702px;top:702px;width:98px;height:1px;background:#808080"></div><div class="r" style="left:702px;top:702px;width:1px;height:17px;background:#808080"></div><div class="r" style="left:702px;top:718px;width:98px;height:1px;background:#ffffff"></div><div class="r" style="left:799px;top:702px;width:1px;height:17px;background:#ffffff"></div><div class="r" style="left:802px;top:702px;width:477px;height:1px;background:#808080"></div><div class="r" style="left:802px;top:702px;width:1px;height:17px;background:#808080"></div><div class="r" style="left:802px;top:718px;width:339px;height:1px;background:#ffffff"></div><div class="r" style="left:1279px;top:702px;width:1px;height:13px;background:#ffffff"></div><div class="r" style="left:0px;top:721px;width:200px;height:1px;background:#808080"></div><div class="r" style="left:0px;top:721px;width:1px;height:17px;background:#808080"></div><div class="r" style="left:0px;top:737px;width:200px;height:1px;background:#ffffff"></div><div class="r" style="left:199px;top:721px;width:1px;height:17px;background:#ffffff"></div><div class="r" style="left:202px;top:721px;width:148px;height:1px;background:#808080"></div><div class="r" style="left:202px;top:721px;width:1px;height:17px;background:#808080"></div><div class="r" style="left:202px;top:737px;width:148px;height:1px;background:#ffffff"></div><div class="r" style="left:349px;top:721px;width:1px;height:17px;background:#ffffff"></div><div class="r" style="left:352px;top:721px;width:98px;height:1px;background:#808080"></div><div class="r" style="left:352px;top:721px;width:1px;height:17px;background:#808080"></div><div class="r" style="left:352px;top:737px;width:98px;height:1px;background:#ffffff"></div><div class="r" style="left:449px;top:721px;width:1px;height:17px;background:#ffffff"></div><div class="r" style="left:452px;top:721px;width:198px;height:1px;background:#808080"></div><div class="r" style="left:452px;top:721px;width:1px;height:17px;background:#808080"></div><div class="r" style="left:452px;top:737px;width:198px;height:1px;background:#ffffff"></div><div class="r" style="left:649px;top:721px;width:1px;height:17px;background:#ffffff"></div><div class="r" style="left:652px;top:721px;width:628px;height:1px;background:#808080"></div><div class="r" style="left:652px;top:721px;width:1px;height:17px;background:#808080"></div><div class="r" style="left:652px;top:737px;width:628px;height:1px;background:#ffffff"></div><div class="r" style="left:1279px;top:721px;width:1px;height:17px;background:#ffffff"></div><div class="r" style="left:0px;top:739px;width:1280px;height:1px;background:#ffffff"></div><div class="t s" style="left:2px;top:704px">登陆姓名:超级用户</div><div class="t s" style="left:153px;top:704px">登陆时间:<span class="a">2009-03-13 08:51:56</span></div><div class="t s" style="left:353px;top:704px">人工取消<svg class="ex" width="7" height="14" shape-rendering="crispEdges"><path d="M3 2h2v1h-2zM2 3h4v3h-4zM3 6h2v2h-2zM3 9h2v2h-2z" fill="#000"/></svg></div><div class="t s" style="left:503px;top:704px">下载完成<svg class="ex" width="7" height="14" shape-rendering="crispEdges"><path d="M3 2h2v1h-2zM2 3h4v3h-4zM3 6h2v2h-2zM3 9h2v2h-2z" fill="#000"/></svg></div><div class="t s" style="left:703px;top:704px">打开<span class="a">Com3</span>失败<svg class="ex" width="7" height="14" shape-rendering="crispEdges"><path d="M3 2h2v1h-2zM2 3h4v3h-4zM3 6h2v2h-2zM3 9h2v2h-2z" fill="#000"/></svg></div><div class="t s" style="left:803px;top:704px">下载完成<svg class="ex" width="7" height="14" shape-rendering="crispEdges"><path d="M3 2h2v1h-2zM2 3h4v3h-4zM3 6h2v2h-2zM3 9h2v2h-2z" fill="#000"/></svg></div><div class="t s" style="left:2px;top:723px">欢迎使用收费管理系统</div><div class="t s" style="left:203px;top:723px">版权所有，翻版必究</div><div class="t s" style="left:353px;top:723px">当前系统时间</div><div class="t s" style="left:453px;top:723px">当前时间：<span class="a">2009-03-13 09:23:12</span></div><div class="t s" style="left:653px;top:723px">数据采集 发生于<span class="a">2009-03-13 09:22:24</span></div></div></body></html>
